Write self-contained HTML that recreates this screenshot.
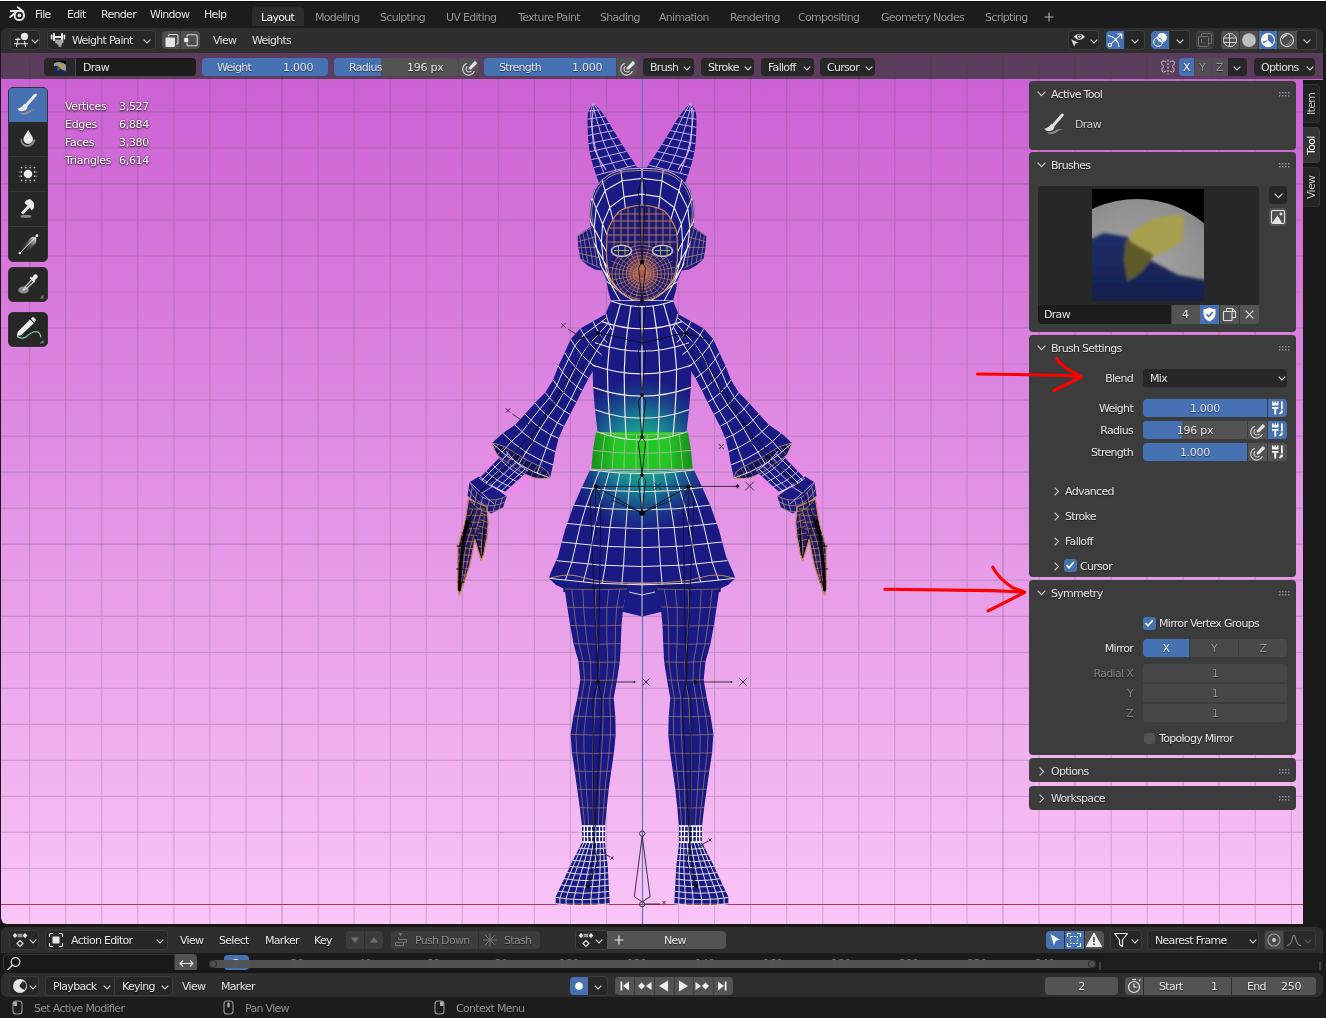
<!DOCTYPE html>
<html><head><meta charset="utf-8"><title>Blender</title>
<style>
*{box-sizing:border-box;margin:0;padding:0}
html,body{width:1326px;height:1018px;overflow:hidden;background:#181818}
body{position:relative;font-family:"DejaVu Sans","Liberation Sans",sans-serif;font-size:11px;letter-spacing:-0.7px;color:#e6e6e6;line-height:13px;white-space:nowrap}
.a{position:absolute}
.t{position:absolute;height:13px;line-height:13px;text-shadow:0 1px 1px rgba(0,0,0,.55)}
.st{color:#fff;letter-spacing:-0.3px;text-shadow:0 1px 2px rgba(0,0,0,.8),0 0 2px rgba(0,0,0,.5)}
.rot{transform-origin:0 0;transform:rotate(-90deg)}
.n{letter-spacing:-0.25px}
.dim{color:#989898}
.btn{position:absolute;background:#282828;border:1px solid #3d3d3d;border-radius:4px}
.grp{position:absolute;background:#545454;border-radius:4px}
.num{position:absolute;background:#545454;border-radius:4px;overflow:hidden}
.blue{background:#4772b3 !important}
.panel{position:absolute;background:#3d3d3d;border-radius:4px}
svg{position:absolute;overflow:visible}
#root{position:absolute;left:0;top:0;width:1326px;height:1018px;will-change:transform;opacity:.999}
</style></head><body><div id="root">
<div class="a" id="topbar" style="left:0;top:0;width:1326px;height:28px;background:#1d1d1d;border-top:1px solid #fff;box-shadow:inset 0 1px 0 #0c0c0c">
<svg style="left:9px;top:5px" width="17" height="17" viewBox="9 6 17 17"><g fill="none" stroke="#e6e6e6" stroke-width="2" stroke-linecap="round"><circle cx="19.3" cy="15.4" r="4.700"/><path d="M11 10.9H20.5M17.8 7.3L23.2 11.6M10.3 17L15.5 12.4"/></g><circle cx="19.3" cy="15.4" r="1.9" fill="#e6e6e6"/></svg>
<span class="t" style="left:35px;top:7px">File</span>
<span class="t" style="left:67px;top:7px">Edit</span>
<span class="t" style="left:101px;top:7px">Render</span>
<span class="t" style="left:150px;top:7px">Window</span>
<span class="t" style="left:204px;top:7px">Help</span>
<div class="a" style="left:252px;top:6px;width:52px;height:19px;background:#2d2d2d;border-radius:4px 4px 0 0"></div>
<span class="t" style="left:261px;top:10px;color:#fff">Layout</span>
<span class="t dim" style="left:315px;top:10px">Modeling</span>
<span class="t dim" style="left:380px;top:10px">Sculpting</span>
<span class="t dim" style="left:446px;top:10px">UV Editing</span>
<span class="t dim" style="left:518px;top:10px">Texture Paint</span>
<span class="t dim" style="left:600px;top:10px">Shading</span>
<span class="t dim" style="left:659px;top:10px">Animation</span>
<span class="t dim" style="left:730px;top:10px">Rendering</span>
<span class="t dim" style="left:798px;top:10px">Compositing</span>
<span class="t dim" style="left:881px;top:10px">Geometry Nodes</span>
<span class="t dim" style="left:985px;top:10px">Scripting</span>
<svg style="left:1044px;top:11px" width="10" height="10" viewBox="0 0 10 10"><path d="M5 0.5V9.5M0.5 5H9.5" stroke="#b0b0b0" stroke-width="1.1"/></svg>
</div>
<div class="a" id="vp" style="left:1px;top:28px;width:1322px;height:896px;border-radius:9px 9px 6px 6px;overflow:hidden;background:linear-gradient(#ca5cd2,#fbc6f8)">
<svg style="left:0;top:0" width="1322" height="896" viewBox="1 28 1322 896">
<path d="M29.7 28V924M65.7 28V924M101.8 28V924M137.8 28V924M173.9 28V924M209.9 28V924M246 28V924M318.1 28V924M354.1 28V924M390.2 28V924M426.2 28V924M462.2 28V924M498.3 28V924M534.4 28V924M570.4 28V924M606.5 28V924M678.5 28V924M714.6 28V924M750.6 28V924M786.7 28V924M822.8 28V924M858.8 28V924M894.8 28V924M930.9 28V924M967 28V924M1039 28V924M1075.1 28V924M1111.2 28V924M1147.2 28V924M1183.2 28V924M1219.3 28V924M1255.3 28V924M1291.4 28V924M1 868.5H1323M1 832.4H1323M1 796.4H1323M1 760.4H1323M1 724.4H1323M1 688.3H1323M1 652.3H1323M1 616.3H1323M1 580.2H1323M1 508.2H1323M1 472.1H1323M1 436.1H1323M1 400.1H1323M1 364H1323M1 328H1323M1 292H1323M1 256H1323M1 219.9H1323M1 147.9H1323M1 111.8H1323M1 75.8H1323M1 39.8H1323" stroke="rgba(90,88,96,.23)" stroke-width="1.2" fill="none"/>
<path d="M282 28V924M1003 28V924M1 544.2H1323M1 183.9H1323" stroke="rgba(88,80,96,.32)" stroke-width="1.25" fill="none"/>
<path d="M1 904.5H1323" stroke="#b5344f" stroke-width="1.2"/>
<path d="M642.5 28V924" stroke="#5d78b8" stroke-width="1.2"/>
</svg>
<svg style="left:0;top:0" width="1322" height="896" viewBox="1 28 1322 896">
<defs>
<radialGradient id="tg" gradientUnits="userSpaceOnUse" cx="642" cy="446" r="78" gradientTransform="translate(642 446) scale(1 .95) translate(-642 -446)"><stop offset="0" stop-color="#22b07a"/><stop offset=".2" stop-color="#1ba08c"/><stop offset=".42" stop-color="#187a94"/><stop offset=".68" stop-color="#1a3f8a"/><stop offset=".92" stop-color="#1b1b86"/></radialGradient>
<linearGradient id="bg" gradientUnits="userSpaceOnUse" x1="593" y1="0" x2="691" y2="0"><stop offset="0" stop-color="#17941d"/><stop offset=".25" stop-color="#25c925"/><stop offset=".75" stop-color="#25c925"/><stop offset="1" stop-color="#17941d"/></linearGradient>
<radialGradient id="sg" gradientUnits="userSpaceOnUse" cx="642" cy="458" r="78"><stop offset="0" stop-color="#22b07a"/><stop offset=".2" stop-color="#1ba08c"/><stop offset=".45" stop-color="#187a94"/><stop offset=".7" stop-color="#1a3f8a"/><stop offset=".95" stop-color="#1b1b86"/></radialGradient>
<radialGradient id="fg" gradientUnits="userSpaceOnUse" cx="642" cy="272" r="22"><stop offset="0" stop-color="#d06a48" stop-opacity=".85"/><stop offset="1" stop-color="#d06a48" stop-opacity="0"/></radialGradient>
<clipPath id="hclip"><path d="M642 167.5L625 168.5L610 173L600 181L594 190L590 202L589 215L590.5 226L595 248L601 268L606.5 280L608 290L611 301L673 301L676 290L677.5 280L683 268L689 248L693.5 226L695 215L694 202L690 190L684 181L674 173L659 168.5L642 167.5Z"/></clipPath>
<clipPath id="fclip"><path d="M642 205L630 207L618.6 212L608.8 227.5L606.8 240L607 262L611 280L620 292L632 299L642 300.5L642 300.5L652 299L664 292L673 280L677 262L677.2 240L675.2 227.5L665.4 212L654 207L642 205Z"/></clipPath>
<filter id="gl" x="-50%" y="-50%" width="200%" height="200%"><feGaussianBlur stdDeviation="2.5"/></filter>
</defs>
<g filter="url(#gl)" fill="none" stroke="#ff7cf5" stroke-width="3" opacity=".9"><path d="M500 455L478 480M530 476L508 496M784 455L806 480M754 476L776 496"/><path d="M462 500L470 520M822 500L814 520"/></g>

<g id="body">
<path d="M592.5 104.2L588.2 111L587.5 119.2L587.6 127.3L587.9 135.5L588.4 143.7L589.6 151.7L591.4 159.7L593.6 167.6L596.1 175.3L599 183L640 172L635.7 165L631.1 158.2L626.6 151.4L622.1 144.5L617.8 137.6L613.4 130.6L609.3 123.5L604.9 116.6L600.1 109.9L594.5 104Z" fill="#1b1b86"/>
<path d="M691.5 104.2L695.8 111L696.5 119.2L696.4 127.3L696.1 135.5L695.6 143.7L694.4 151.7L692.6 159.7L690.4 167.6L687.9 175.3L685 183L644 172L648.3 165L652.9 158.2L657.4 151.4L661.9 144.5L666.2 137.6L670.6 130.6L674.7 123.5L679.1 116.6L683.9 109.9L689.5 104Z" fill="#1b1b86"/>
<path d="M592 226L586 230L577.5 236L578.5 248L580.5 259L587 265L595 269.5L606 271L604 240Z" fill="#1b1b86"/>
<path d="M692 226L698 230L706.5 236L705.5 248L703.5 259L697 265L689 269.5L678 271L680 240Z" fill="#1b1b86"/>
<path d="M642 167.5L625 168.5L610 173L600 181L594 190L590 202L589 215L590.5 226L595 248L601 268L606.5 280L608 290L611 301L673 301L676 290L677.5 280L683 268L689 248L693.5 226L695 215L694 202L690 190L684 181L674 173L659 168.5L642 167.5Z" fill="#1b1b86"/>
<path d="M642 205L630 207L618.6 212L608.8 227.5L606.8 240L607 262L611 280L620 292L632 299L642 300.5L642 300.5L652 299L664 292L673 280L677 262L677.2 240L675.2 227.5L665.4 212L654 207L642 205Z" fill="#1d1c78"/>
<path d="M606 314L593.1 321.3L580.2 328.4L570.6 339.2L564.6 352.7L558.4 366.1L553 379.9L545.2 392.4L534.9 403L525.1 414.1L515 424.9L502.8 433.3L492 443L550 478L553 464.9L555.3 451.6L558.6 438.5L563.9 426.2L570.1 414.3L576.4 402.3L582.3 390.3L588.6 378.3L595.5 366.8L601.6 354.9L607.1 342.5L612 330Z" fill="#1b1b86"/>
<path d="M678 314L690.9 321.3L703.8 328.4L713.4 339.2L719.4 352.7L725.6 366.1L731 379.9L738.8 392.4L749.1 403L758.9 414.1L769 424.9L781.2 433.3L792 443L734 478L731 464.9L728.7 451.6L725.4 438.5L720.1 426.2L713.9 414.3L707.6 402.3L701.7 390.3L695.4 378.3L688.5 366.8L682.4 354.9L676.9 342.5L672 330Z" fill="#1b1b86"/>
<path d="M492 443L497 454.7L508 463L520 471.5L535 478L550 478.2L546 470L525 459L505 447Z" fill="#14145e"/>
<path d="M792 443L787 454.7L776 463L764 471.5L749 478L734 478.2L738 470L759 459L779 447Z" fill="#14145e"/>
<path d="M506 451L499.3 457.8L492.6 464.6L486 471.4L479.3 478.2L504.8 492L510.6 486.8L516.4 481.5L522.2 476.2L528 471Z" fill="#1b1b86"/>
<path d="M778 451L784.7 457.8L791.4 464.6L798 471.4L804.7 478.2L779.2 492L773.4 486.8L767.6 481.5L761.8 476.2L756 471Z" fill="#1b1b86"/>
<path d="M469.5 482.2L479.3 476.3L506.8 495.9L502.9 507.7L491 513.6L467.5 495.9Z" fill="#1b1b86"/>
<path d="M814.5 482.2L804.7 476.3L777.2 495.9L781.1 507.7L793 513.6L816.5 495.9Z" fill="#1b1b86"/>
<path d="M468.5 499L487 507L488.2 523L487 538L484 552L481.2 561L478.5 552L475 539L472.5 552L469.6 566L464 583L459.2 595L457.7 588L457.9 547L461 535L464.7 524Z" fill="#201c6a"/>
<path d="M815.5 499L797 507L795.8 523L797 538L800 552L802.8 561L805.5 552L809 539L811.5 552L814.4 566L820 583L824.8 595L826.3 588L826.1 547L823 535L819.3 524Z" fill="#201c6a"/>
<path d="M611 301L605 315L597 335L592.5 360L593 385.6L595 410L597.5 432L686.5 432L689 410L691 385.6L691.5 360L687 335L679 315L673 301Z" fill="url(#tg)"/>
<path d="M596 432L593 450L591.3 469L692.7 469L691 450L688 432Z" fill="url(#bg)"/>
<path d="M563.5 592L562 572L628 572L627 592Z" fill="#17176e"/>
<path d="M720.5 592L722 572L656 572L657 592Z" fill="#17176e"/>
<path d="M590 470L582 487L573.6 505.7L565 530L557.9 556.8L551 572L548.8 578.3L556 585L564.6 589.1L600 585L642 583L684 585L719.4 589.1L728 585L735.2 578.3L735.2 578.3L733 572L726.1 556.8L719 530L710.4 505.7L702 487L694 470Z" fill="url(#sg)"/>
<path d="M627.4 584L622.5 611.7L642.2 616.6L661.9 611.7L657 584Z" fill="#1c1c86"/>
<path d="M564.6 589L567.3 607.3L570.2 625.5L573.5 643.7L578.5 661.5L580.3 679.8L577.3 698L573.4 716.1L570.6 734.3L571.9 752.8L574.7 771L577.2 789.3L579.8 807.6L582 826L605 826L606.7 807.7L608.7 789.4L611.2 771.2L613.9 753.1L615.7 734.8L615.3 716.4L613.7 698.1L617 680.1L619.8 662L620.8 643.6L621.5 625.3L623.3 607L627 589Z" fill="#1b1b86"/>
<path d="M719.4 589L716.7 607.3L713.8 625.5L710.5 643.7L705.5 661.5L703.7 679.8L706.7 698L710.6 716.1L713.4 734.3L712.1 752.8L709.3 771L706.8 789.3L704.2 807.6L702 826L679 826L677.3 807.7L675.3 789.4L672.8 771.2L670.1 753.1L668.3 734.8L668.7 716.4L670.3 698.1L667 680.1L664.2 662L663.2 643.6L662.5 625.3L660.7 607L657 589Z" fill="#1b1b86"/>
<path d="M582 826L582.1 831.3L582.1 836.7L582.2 842L604.8 842L604.9 836.7L604.9 831.3L605 826Z" fill="#1b1b86"/>
<path d="M702 826L701.9 831.3L701.9 836.7L701.8 842L679.2 842L679.1 836.7L679.1 831.3L679 826Z" fill="#1b1b86"/>
<path d="M582.2 842L571.4 863.4L555.7 896.8L555.7 903.7L609.7 903.7L607.8 867.3L604.8 842Z" fill="#1b1b86"/>
<path d="M701.8 842L712.6 863.4L728.3 896.8L728.3 903.7L674.3 903.7L676.2 867.3L679.2 842Z" fill="#1b1b86"/>
<ellipse cx="642" cy="272" rx="16" ry="22" fill="url(#fg)"/>
</g>
<g fill="none" stroke-linejoin="round">
<path d="M592.5 104.2Q593.5 104.1 594.5 104M588.2 111Q594.2 110.5 600.1 109.9M587.5 119.2Q596.2 117.9 604.9 116.6M587.6 127.3Q598.4 125.4 609.3 123.5M587.9 135.5Q600.7 133 613.4 130.6M588.4 143.7Q603.1 140.6 617.8 137.6M589.6 151.7Q605.9 148.1 622.1 144.5M591.4 159.7Q609 155.5 626.6 151.4M593.6 167.6Q612.4 162.9 631.1 158.2M596.1 175.3Q615.9 170.2 635.7 165M592.9 104.2L590.6 110.8L591 118.7L591.9 126.6L593 134.5L594.2 142.5L596.1 150.3L598.4 158L601.1 165.7L604 173.3M593.5 104.1L594.2 110.5L596.2 117.9L598.4 125.4L600.7 133L603.1 140.6L605.9 148.1L609 155.5L612.4 162.9L615.9 170.2M594.1 104L597.8 110.2L601.5 117.1L605 124.3L608.4 131.6L611.9 138.8L615.7 145.9L619.6 153L623.7 160.1L627.9 167.1M691.5 104.2Q690.5 104.1 689.5 104M695.8 111Q689.8 110.5 683.9 109.9M696.5 119.2Q687.8 117.9 679.1 116.6M696.4 127.3Q685.6 125.4 674.7 123.5M696.1 135.5Q683.3 133 670.6 130.6M695.6 143.7Q680.9 140.6 666.2 137.6M694.4 151.7Q678.1 148.1 661.9 144.5M692.6 159.7Q675 155.5 657.4 151.4M690.4 167.6Q671.6 162.9 652.9 158.2M687.9 175.3Q668.1 170.2 648.3 165M691.1 104.2L693.4 110.8L693 118.7L692.1 126.6L691 134.5L689.8 142.5L687.9 150.3L685.6 158L682.9 165.7L680 173.3M690.5 104.1L689.8 110.5L687.8 117.9L685.6 125.4L683.3 133L680.9 140.6L678.1 148.1L675 155.5L671.6 162.9L668.1 170.2M689.9 104L686.2 110.2L682.5 117.1L679 124.3L675.6 131.6L672.1 138.8L668.3 145.9L664.4 153L660.3 160.1L656.1 167.1" stroke="#d9b6ea" stroke-width="0.9"/>
<path d="M593.5 108L593.1 111.4L592.6 114.8L592.2 118.2L592 121.6L592 125.1L592.1 128.5L592.3 131.9L592.5 135.4L592.9 138.8L593.3 142.2L593.9 145.6L594.7 148.9L595.8 152.2L597.2 155.3L598.8 158.3L600.6 161.2L602.4 164.1L604.3 167L606 170M691.5 108L691.7 111.4L691.9 114.8L692.1 118.3L692.1 121.7L692 125.1L691.8 128.5L691.6 132L691.4 135.4L691.1 138.8L690.7 142.2L690.1 145.6L689.3 148.9L688.2 152.2L686.8 155.3L685.2 158.3L683.4 161.3L681.6 164.1L679.7 167L678 170" stroke="#d9b6ea" stroke-width="1.1"/>
<path d="M577.5 236Q584.8 231.5 592 227M577.9 241.8Q586.5 239.4 595 237M578.4 247.6Q587.9 247.4 597.4 247.2M579.4 253.3Q589.1 255.4 598.8 257.6M580.5 259Q590.2 263.5 600 268M579.6 234.7L580.4 241.1L581.2 247.5L582.3 253.9L583.4 260.3M582.9 232.6L584.3 240L585.5 247.4L586.6 254.9L587.8 262.4M586.6 230.4L588.6 238.8L590.3 247.4L591.6 256L592.7 264.6M589.9 228.3L592.5 237.7L594.6 247.3L595.9 257L597.1 266.7M706.5 236Q699.2 231.5 692 227M706.1 241.8Q697.5 239.4 689 237M705.6 247.6Q696.1 247.4 686.6 247.2M704.6 253.3Q694.9 255.4 685.2 257.6M703.5 259Q693.8 263.5 684 268M704.4 234.7L703.6 241.1L702.8 247.5L701.7 253.9L700.6 260.3M701.1 232.6L699.7 240L698.5 247.4L697.4 254.9L696.2 262.4M697.4 230.4L695.4 238.8L693.7 247.4L692.4 256L691.3 264.6M694.1 228.3L691.5 237.7L689.4 247.3L688.1 257L686.9 266.7" stroke="#b9916b" stroke-width="0.7"/>
<path d="M642 167.5Q642 186.2 642 205M620.7 169.3Q623 188.8 625.4 208.3M601.7 178.8Q607.4 199 613.1 219.3M591.7 197.4Q599.4 216.2 607 234.9M589 218.6Q597.8 235.2 606.5 251.9M592 239.8Q599.9 254.3 607.9 268.8M597.3 260.5Q605.4 272.6 613.5 284.6M605.2 280.4Q615.5 288.3 625.8 296.1M611 301Q626.5 300.8 642 300.5M642 178.4L622.1 180.7L605.1 190.6L596.2 208.3L594.1 228.3L596.6 248.2L602 267.6L611.2 285L620 300.9M642 194.1L624 196.9L609.8 207.5L602.6 224L601.4 242.2L603.3 260.3L608.8 277.6L619.8 291.5L633 300.6M642 167.5Q642 186.2 642 205M663.3 169.3Q661 188.8 658.6 208.3M682.3 178.8Q676.6 199 670.9 219.3M692.3 197.4Q684.6 216.2 677 234.9M695 218.6Q686.2 235.2 677.5 251.9M692 239.8Q684.1 254.3 676.1 268.8M686.7 260.5Q678.6 272.6 670.5 284.6M678.8 280.4Q668.5 288.3 658.2 296.1M673 301Q657.5 300.8 642 300.5M642 178.4L661.9 180.7L678.9 190.6L687.8 208.3L689.9 228.3L687.4 248.2L682 267.6L672.8 285L664 300.9M642 194.1L660 196.9L674.2 207.5L681.4 224L682.6 242.2L680.7 260.3L675.2 277.6L664.2 291.5L651 300.6" stroke="#efe8e2" stroke-width="1.1" clip-path="url(#hclip)"/>
<path d="M591.8 226L590.8 221.4L589.9 216.8L589.8 212.1L590.1 207.4L590.7 202.7L591.9 198.1L593.4 193.6L595.3 189.3L597.7 185.3L600.7 181.6L604.1 178.3L607.8 175.4L611.9 173.2L616.3 171.5L620.9 170.3L625.5 169.3L630.2 168.8L634.9 168.5L639.6 168.4L644.4 168.4L649.1 168.5L653.8 168.8L658.5 169.3L663.1 170.3L667.7 171.5L672.1 173.2L676.2 175.4L679.9 178.3L683.3 181.6L686.3 185.3L688.7 189.3L690.6 193.6L692.1 198.1L693.3 202.7L693.9 207.4L694.2 212.1L694.1 216.8L693.2 221.4L692.2 226" stroke="#cdb6c8" stroke-width="1.0"/>
<path d="M593.5 226.1L592.6 221.7L591.8 217.2L591.6 212.6L591.9 208.1L592.5 203.6L593.6 199.2L595.1 194.9L597 190.7L599.3 186.8L602.2 183.3L605.4 180.1L609 177.3L613 175.1L617.3 173.5L621.6 172.3L626.1 171.4L630.6 170.9L635.2 170.6L639.7 170.5L644.3 170.5L648.8 170.6L653.4 170.9L657.9 171.4L662.4 172.3L666.7 173.5L671 175.1L675 177.3L678.6 180.1L681.8 183.3L684.7 186.8L687 190.7L688.9 194.9L690.4 199.2L691.5 203.6L692.1 208.1L692.4 212.6L692.2 217.2L691.4 221.7L690.5 226.1" stroke="#b99a8a" stroke-width="0.9"/>
<path d="M647 274L646.9 274.8L646.7 275.7L646.3 276.4L645.8 277.1L645.1 277.7L644.4 278.2L643.5 278.5L642.7 278.7L641.8 278.7L640.9 278.6L640 278.4L639.2 278L638.5 277.4L638 276.8L637.5 276.1L637.2 275.3L637 274.4L637 273.6L637.2 272.7L637.5 271.9L638 271.2L638.5 270.6L639.2 270L640 269.6L640.9 269.4L641.8 269.3L642.7 269.3L643.5 269.5L644.4 269.8L645.1 270.3L645.8 270.9L646.3 271.6L646.7 272.3L646.9 273.2L647 274ZM650.6 274L650.4 275.5L650 276.9L649.4 278.2L648.5 279.4L647.3 280.4L646.1 281.2L644.6 281.7L643.2 282.1L641.6 282.1L640.1 281.9L638.6 281.5L637.3 280.8L636.1 279.9L635.1 278.8L634.3 277.5L633.7 276.2L633.5 274.7L633.5 273.3L633.7 271.8L634.3 270.5L635.1 269.2L636.1 268.1L637.3 267.2L638.6 266.5L640.1 266.1L641.6 265.9L643.2 265.9L644.6 266.3L646.1 266.8L647.3 267.6L648.5 268.6L649.4 269.8L650 271.1L650.4 272.5L650.6 274ZM654.1 274L653.9 276.1L653.4 278.1L652.4 279.9L651.1 281.6L649.6 283L647.8 284.2L645.8 285L643.6 285.4L641.5 285.5L639.3 285.2L637.2 284.6L635.3 283.6L633.6 282.3L632.2 280.8L631.1 279L630.3 277.1L629.9 275L629.9 273L630.3 270.9L631.1 269L632.2 267.2L633.6 265.7L635.3 264.4L637.2 263.4L639.3 262.8L641.5 262.5L643.6 262.6L645.8 263L647.8 263.8L649.6 265L651.1 266.4L652.4 268.1L653.4 269.9L653.9 271.9L654.1 274ZM657.7 274L657.5 276.7L656.7 279.2L655.5 281.7L653.8 283.8L651.8 285.7L649.4 287.1L646.9 288.2L644.1 288.8L641.3 288.9L638.5 288.6L635.8 287.7L633.3 286.5L631.1 284.8L629.3 282.8L627.8 280.5L626.9 278L626.3 275.3L626.3 272.7L626.9 270L627.8 267.5L629.3 265.2L631.1 263.2L633.3 261.5L635.8 260.3L638.5 259.4L641.3 259.1L644.1 259.2L646.9 259.8L649.4 260.9L651.8 262.3L653.8 264.2L655.5 266.3L656.7 268.8L657.5 271.3L657.7 274ZM661.3 274L661 277.3L660.1 280.4L658.6 283.4L656.5 286.1L654 288.3L651.1 290.1L648 291.4L644.6 292.2L641.1 292.3L637.7 291.9L634.4 290.8L631.4 289.3L628.7 287.2L626.4 284.8L624.6 281.9L623.4 278.9L622.8 275.6L622.8 272.4L623.4 269.1L624.6 266.1L626.4 263.2L628.7 260.8L631.4 258.7L634.4 257.2L637.7 256.1L641.1 255.7L644.6 255.8L648 256.6L651.1 257.9L654 259.7L656.5 261.9L658.6 264.6L660.1 267.6L661 270.7L661.3 274ZM664.9 274L664.5 277.9L663.4 281.6L661.6 285.1L659.2 288.3L656.3 291L652.8 293.1L649.1 294.7L645.1 295.5L641 295.7L636.9 295.2L633 294L629.4 292.1L626.2 289.7L623.5 286.8L621.4 283.4L620 279.8L619.2 275.9L619.2 272.1L620 268.2L621.4 264.6L623.5 261.2L626.2 258.3L629.4 255.9L633 254L636.9 252.8L641 252.3L645.1 252.5L649.1 253.3L652.8 254.9L656.3 257L659.2 259.7L661.6 262.9L663.4 266.4L664.5 270.1L664.9 274ZM668.4 274L668 278.5L666.7 282.8L664.7 286.9L661.9 290.5L658.5 293.6L654.5 296.1L650.2 297.9L645.5 298.9L640.8 299.1L636.1 298.5L631.6 297.1L627.4 295L623.7 292.1L620.6 288.8L618.2 284.9L616.5 280.7L615.7 276.3L615.7 271.7L616.5 267.3L618.2 263.1L620.6 259.2L623.7 255.9L627.4 253L631.6 250.9L636.1 249.5L640.8 248.9L645.5 249.1L650.2 250.1L654.5 251.9L658.5 254.4L661.9 257.5L664.7 261.1L666.7 265.2L668 269.5L668.4 274ZM672 274L671.5 279.1L670.1 284L667.8 288.6L664.6 292.8L660.7 296.3L656.2 299.1L651.3 301.1L646 302.2L640.7 302.5L635.3 301.8L630.2 300.2L625.5 297.8L621.3 294.6L617.7 290.8L615 286.4L613.1 281.6L612.1 276.6L612.1 271.4L613.1 266.4L615 261.6L617.7 257.2L621.3 253.4L625.5 250.2L630.2 247.8L635.3 246.2L640.7 245.5L646 245.8L651.3 246.9L656.2 248.9L660.7 251.7L664.6 255.2L667.8 259.4L670.1 264L671.5 268.9L672 274Z" stroke="#cf8a55" stroke-width="0.7" clip-path="url(#fclip)"/>
<path d="M646 274L676 274M645.9 274.9L675.1 280.7M645.6 275.7L672.6 287M645.1 276.5L668.6 292.7M644.5 277.1L663.2 297.5M643.7 277.6L656.8 301M642.9 277.9L649.6 303.2M642 278L642 304M641.1 277.9L634.4 303.2M640.3 277.6L627.2 301M639.5 277.1L620.8 297.5M638.9 276.5L615.4 292.7M638.4 275.7L611.4 287M638.1 274.9L608.9 280.7M638 274L608 274M638.1 273.1L608.9 267.3M638.4 272.3L611.4 261M638.9 271.5L615.4 255.3M639.5 270.9L620.8 250.5M640.3 270.4L627.2 247M641.1 270.1L634.4 244.8M642 270L642 244M642.9 270.1L649.6 244.8M643.7 270.4L656.8 247M644.5 270.9L663.2 250.5M645.1 271.5L668.6 255.3M645.6 272.3L672.6 261M645.9 273.1L675.1 267.3" stroke="#cf8a55" stroke-width="0.6" clip-path="url(#fclip)"/>
<path d="M614 208V246M621 208V246M628 208V246M635 208V246M642 208V246M649 208V246M656 208V246M663 208V246M670 208V246M608 214H676M608 221H676M608 228H676M608 235H676M608 242H676" stroke="#cf8a55" stroke-width="0.8" clip-path="url(#fclip)"/>
<path d="M642 205L638.6 205.5L635.1 205.9L631.7 206.5L628.4 207.4L625.1 208.4L621.9 209.7L619 211.6L616.7 214.2L614.6 217L612.8 219.9L611 222.9L609.5 226L608.2 229.2L607.3 232.5L607 235.9L606.8 239.4L606.7 242.9L606.6 246.3L606.5 249.8L606.5 253.2L606.6 256.7L606.8 260.2L607.2 263.6L607.6 267L608.2 270.4L609 273.8L609.9 277.2L611.2 280.4L612.8 283.4L614.7 286.3L616.9 289L619.4 291.4L622 293.6L624.9 295.6L627.9 297.2L631.1 298.6L634.4 299.7L637.8 300.2L641.3 300.4L642.7 300.4L646.2 300.2L649.6 299.7L652.9 298.6L656.1 297.2L659.1 295.6L662 293.6L664.6 291.4L667.1 289L669.3 286.3L671.2 283.4L672.8 280.4L674.1 277.2L675 273.8L675.8 270.4L676.4 267L676.8 263.6L677.2 260.2L677.4 256.7L677.5 253.2L677.5 249.8L677.4 246.3L677.3 242.9L677.2 239.4L677 235.9L676.7 232.5L675.8 229.2L674.5 226L673 222.9L671.2 219.9L669.4 217L667.3 214.2L665 211.6L662.1 209.7L658.9 208.4L655.6 207.4L652.3 206.5L648.9 205.9L645.4 205.5L642 205ZM468.5 499L487 507L488.2 523L487 538L484 552L481.2 561L478.5 552L475 539L472.5 552L469.6 566L464 583L459.2 595L457.7 588L457.9 547L461 535L464.7 524ZM815.5 499L797 507L795.8 523L797 538L800 552L802.8 561L805.5 552L809 539L811.5 552L814.4 566L820 583L824.8 595L826.3 588L826.1 547L823 535L819.3 524Z" stroke="#cf8a55" stroke-width="1.2"/>
<path d="M606 314Q607.9 323.7 612 330M593.1 321.3Q598.5 334.5 607.1 342.5M580.2 328.4Q588.7 345.1 601.6 354.9M570.6 339.2Q580.7 356.8 595.5 366.8M564.6 352.7Q574.3 369.1 588.6 378.3M558.4 366.1Q568.2 381.6 582.3 390.3M553 379.9Q562.6 394.4 576.4 402.3M545.2 392.4Q555.5 406.7 570.1 414.3M534.9 403Q547 418.4 563.9 426.2M525.1 414.1Q539.2 430.5 558.6 438.5M515 424.9Q532.1 443.2 555.3 451.6M502.8 433.3Q524.1 455.1 553 464.9M492 443Q516.6 467.4 550 478M606.8 317.7L595.4 326.3L583.7 334.8L574.8 345.8L568.6 358.9L562.5 372L556.9 385.4L549.5 397.8L539.9 408.8L530.9 420.3L522 431.8L511.6 441.4L502.1 452.1M608.5 322.9L599.3 333.2L589.8 343.4L581.8 354.9L575.5 367.3L569.3 379.9L563.6 392.7L556.6 405L548.2 416.5L540.5 428.4L533.6 440.7L526 452.1L518.8 463.9M610.5 327.4L603.8 339.1L596.7 350.7L589.8 362.5L583.1 374.4L576.9 386.6L571.1 398.9L564.5 411L557.4 422.8L551.1 435L546.3 447.9L541.8 460.5L537.1 473.2M678 314Q676.1 323.7 672 330M690.9 321.3Q685.5 334.5 676.9 342.5M703.8 328.4Q695.3 345.1 682.4 354.9M713.4 339.2Q703.3 356.8 688.5 366.8M719.4 352.7Q709.7 369.1 695.4 378.3M725.6 366.1Q715.8 381.6 701.7 390.3M731 379.9Q721.4 394.4 707.6 402.3M738.8 392.4Q728.5 406.7 713.9 414.3M749.1 403Q737 418.4 720.1 426.2M758.9 414.1Q744.8 430.5 725.4 438.5M769 424.9Q751.9 443.2 728.7 451.6M781.2 433.3Q759.9 455.1 731 464.9M792 443Q767.4 467.4 734 478M677.2 317.7L688.6 326.3L700.3 334.8L709.2 345.8L715.4 358.9L721.5 372L727.1 385.4L734.5 397.8L744.1 408.8L753.1 420.3L762 431.8L772.4 441.4L781.9 452.1M675.5 322.9L684.7 333.2L694.2 343.4L702.2 354.9L708.5 367.3L714.7 379.9L720.4 392.7L727.4 405L735.8 416.5L743.5 428.4L750.4 440.7L758 452.1L765.2 463.9M673.5 327.4L680.2 339.1L687.3 350.7L694.2 362.5L700.9 374.4L707.1 386.6L712.9 398.9L719.5 411L726.6 422.8L732.9 435L737.7 447.9L742.2 460.5L746.9 473.2" stroke="#efe8e2" stroke-width="0.95"/>
<path d="M492 443L494.2 449.2L497.3 455L502.4 459.3L507.9 462.9L513.1 466.9L518.6 470.7L524.4 473.8L530.4 476.6L536.8 478.3L543.4 478.5L550 478.2M492 443L498.2 444.5L504.2 446.6L509.8 449.7L515.2 453L520.6 456.4L526.1 459.6L531.8 462.5L537.6 465.3L543.2 468.2L548.1 472.2L550 478.2M792 443L789.8 449.2L786.7 455L781.6 459.3L776.1 462.9L770.9 466.9L765.4 470.7L759.6 473.8L753.6 476.6L747.2 478.3L740.6 478.5L734 478.2M792 443L785.8 444.5L779.8 446.6L774.2 449.7L768.8 453L763.4 456.4L757.9 459.6L752.2 462.5L746.4 465.3L740.8 468.2L735.9 472.2L734 478.2M469.5 482.2Q483.7 508.4 506.8 495.9M468.5 489Q482.3 514.2 504.9 501.8M467.5 495.9Q481 520 502.9 507.7M472.3 486.9L471.2 493.5L470.2 500.2M476.7 492.4L475.5 498.9L474.4 505.3M482.6 497.2L481.3 503.3L479.9 509.5M489.4 499.7L487.9 505.7L486.4 511.7M496.3 499.7L494.7 505.6L493 511.5M502.4 497.9L500.6 503.8L498.8 509.7M814.5 482.2Q800.3 508.4 777.2 495.9M815.5 489Q801.7 514.2 779.1 501.8M816.5 495.9Q803 520 781.1 507.7M811.7 486.9L812.8 493.5L813.8 500.2M807.3 492.4L808.5 498.9L809.6 505.3M801.4 497.2L802.7 503.3L804.1 509.5M794.6 499.7L796.1 505.7L797.6 511.7M787.7 499.7L789.3 505.6L791 511.5M781.6 497.9L783.4 503.8L785.2 509.7" stroke="#b9916b" stroke-width="0.8"/>
<path d="M494.2 449.2L498.2 444.5M497.3 455L504.2 446.6M502.4 459.3L509.8 449.7M507.9 462.9L515.2 453M513.1 466.9L520.6 456.4M518.6 470.7L526.1 459.6M524.4 473.8L531.8 462.5M530.4 476.6L537.6 465.3M536.8 478.3L543.2 468.2M543.4 478.5L548.1 472.2M789.8 449.2L785.8 444.5M786.7 455L779.8 446.6M781.6 459.3L774.2 449.7M776.1 462.9L768.8 453M770.9 466.9L763.4 456.4M765.4 470.7L757.9 459.6M759.6 473.8L752.2 462.5M753.6 476.6L746.4 465.3M747.2 478.3L740.8 468.2M740.6 478.5L735.9 472.2" stroke="#b9916b" stroke-width="0.6"/>
<path d="M506 451Q514.9 463.1 528 471M499.3 457.8Q508.6 469.1 522.2 476.2M492.6 464.6Q502.4 475.1 516.4 481.5M486 471.4Q496.2 481.1 510.6 486.8M479.3 478.2Q490 487.1 504.8 492M508.1 453.8L501.6 460.4L495 467L488.4 473.6L481.8 480.2M511.5 457.7L505.1 464L498.7 470.4L492.3 476.7L485.9 483.1M515.9 462L509.7 468L503.5 474.1L497.2 480.1L491 486.1M520.7 466L514.7 471.7L508.6 477.4L502.6 483.1L496.5 488.8M525 469.1L519.1 474.5L513.2 479.9L507.3 485.4L501.4 490.8M778 451Q769.1 463.1 756 471M784.7 457.8Q775.4 469.1 761.8 476.2M791.4 464.6Q781.6 475.1 767.6 481.5M798 471.4Q787.8 481.1 773.4 486.8M804.7 478.2Q794 487.1 779.2 492M775.9 453.8L782.4 460.4L789 467L795.6 473.6L802.2 480.2M772.5 457.7L778.9 464L785.3 470.4L791.7 476.7L798.1 483.1M768.1 462L774.3 468L780.5 474.1L786.8 480.1L793 486.1M763.3 466L769.3 471.7L775.4 477.4L781.4 483.1L787.5 488.8M759 469.1L764.9 474.5L770.8 479.9L776.7 485.4L782.6 490.8" stroke="#efe8e2" stroke-width="0.8"/>
<path d="M469.5 482.2Q481.8 493.1 494 504M479.3 476.3Q493.1 486.1 506.8 495.9M481.8 493.1L493.1 486.1M814.5 482.2Q802.2 493.1 790 504M804.7 476.3Q791 486.1 777.2 495.9M802.2 493.1L791 486.1" stroke="#d9b6ea" stroke-width="0.8"/>
<path d="M469.6 509Q477.3 509 485 509M467.5 515.4Q475.4 515.5 483.3 515.7M465.4 521.8Q473.5 522.1 481.6 522.4M463.3 528.3Q471.5 528.6 479.7 529M461 534.6Q469.2 535.1 477.3 535.5M459.1 541.1Q467 541.5 474.9 541.9M457.8 547.7Q465.4 548.2 473.1 548.6M457.4 554.5Q464.4 554.9 471.5 555.3M457.4 561.2Q463.7 561.6 470 562M457.6 568Q463 568.4 468.3 568.7M457.8 574.8Q462.1 575 466.4 575.3M458.1 581.5Q461.2 581.7 464.3 581.9M458.5 588.3Q460.3 588.4 462.1 588.4M459 595Q459.5 595 460 595M472.7 509L470.6 515.5L468.6 521.9L466.5 528.4L464.2 534.8L462.2 541.3L460.8 547.9L460.2 554.6L459.9 561.4L459.7 568.1L459.5 574.9L459.3 581.6L459.2 588.3L459.2 595M477.3 509L475.4 515.5L473.5 522.1L471.5 528.6L469.2 535.1L467 541.5L465.4 548.2L464.4 554.9L463.7 561.6L463 568.4L462.1 575L461.2 581.7L460.3 588.4L459.5 595M481.9 509L480.2 515.6L478.4 522.3L476.4 528.8L474.1 535.3L471.8 541.8L470 548.4L468.7 555.1L467.5 561.9L466.2 568.6L464.7 575.2L463.1 581.8L461.4 588.4L459.8 595M814.4 509Q806.7 509 799 509M816.5 515.4Q808.6 515.5 800.7 515.7M818.6 521.8Q810.5 522.1 802.4 522.4M820.7 528.3Q812.5 528.6 804.3 529M823 534.6Q814.8 535.1 806.7 535.5M824.9 541.1Q817 541.5 809.1 541.9M826.2 547.7Q818.6 548.2 810.9 548.6M826.6 554.5Q819.6 554.9 812.5 555.3M826.6 561.2Q820.3 561.6 814 562M826.4 568Q821 568.4 815.7 568.7M826.2 574.8Q821.9 575 817.6 575.3M825.9 581.5Q822.8 581.7 819.7 581.9M825.5 588.3Q823.7 588.4 821.9 588.4M825 595Q824.5 595 824 595M811.3 509L813.4 515.5L815.4 521.9L817.5 528.4L819.8 534.8L821.8 541.3L823.2 547.9L823.8 554.6L824.1 561.4L824.3 568.1L824.5 574.9L824.7 581.6L824.8 588.3L824.8 595M806.7 509L808.6 515.5L810.5 522.1L812.5 528.6L814.8 535.1L817 541.5L818.6 548.2L819.6 554.9L820.3 561.6L821 568.4L821.9 575L822.8 581.7L823.7 588.4L824.5 595M802.1 509L803.8 515.6L805.6 522.3L807.6 528.8L809.9 535.3L812.2 541.8L814 548.4L815.3 555.1L816.5 561.9L817.8 568.6L819.3 575.2L820.9 581.8L822.6 588.4L824.2 595M481 513Q484.5 514.5 488 516M479.8 519.6Q483.8 521 487.8 522.4M478.5 526.1Q483.1 527.4 487.7 528.7M477.4 532.7Q482.4 533.9 487.3 535.1M477 539.3Q481.7 540.4 486.4 541.4M477.7 546Q481.4 546.8 485.1 547.6M479.1 552.5Q481.3 553.1 483.5 553.8M480.5 559Q481.2 559.5 482 560M484.5 514.5L483.8 521L483.1 527.4L482.4 533.9L481.7 540.4L481.4 546.8L481.3 553.1L481.2 559.5M803 513Q799.5 514.5 796 516M804.2 519.6Q800.2 521 796.2 522.4M805.5 526.1Q800.9 527.4 796.3 528.7M806.6 532.7Q801.6 533.9 796.7 535.1M807 539.3Q802.3 540.4 797.6 541.4M806.3 546Q802.6 546.8 798.9 547.6M804.9 552.5Q802.7 553.1 800.5 553.8M803.5 559Q802.8 559.5 802 560M799.5 514.5L800.2 521L800.9 527.4L801.6 533.9L802.3 540.4L802.6 546.8L802.7 553.1L802.8 559.5" stroke="#cf8a55" stroke-width="0.7"/>
<path d="M611 301Q642 312.2 673 301M602.1 321.6Q642 335.9 681.9 321.6M595.1 342.8Q642 359.7 688.9 342.8M592.3 365Q642 382.9 691.7 365M593.1 387.4Q642 405 690.9 387.4M595 409.7Q642 426.7 689 409.7M597.5 432Q642 448 686.5 432M620.4 303.9L614.2 325.3L609.3 347.1L607.4 369.6L607.9 391.9L609.2 414.1L611 436.1M630.9 305.9L627.7 327.8L625.2 350.2L624.2 372.8L624.5 395.1L625.1 417.1L626.1 439M642 306.6L642 328.8L642 351.2L642 374L642 396.2L642 418.2L642 440M653.1 305.9L656.3 327.8L658.8 350.2L659.8 372.8L659.5 395.1L658.9 417.1L657.9 439M663.6 303.9L669.8 325.3L674.7 347.1L676.6 369.6L676.1 391.9L674.8 414.1L673 436.1" stroke="#efe8e2" stroke-width="1.2"/>
<path d="M596 432Q642 437.5 688 432M593 450.4Q642 456.3 691 450.4M591.3 469Q642 475.1 692.7 469M605.1 433L602.7 451.5L601.3 470.1M615 433.8L613.2 452.3L612.2 471M625.5 434.4L624.4 453L623.8 471.7M636.5 434.7L636.1 453.3L635.9 472M647.5 434.7L647.9 453.3L648.1 472M658.5 434.4L659.6 453L660.2 471.7M669 433.8L670.8 452.3L671.8 471M678.9 433L681.3 451.5L682.7 470.1" stroke="#a8b89a" stroke-width="0.9"/>
<path d="M590 470Q642 477.3 694 470M581.8 487.5Q642 496 702.2 487.5M573.8 505.2Q642 514.7 710.2 505.2M567.1 523.4Q642 533.8 716.9 523.4M561.8 542Q642 553.2 722.2 542M556.5 560.6Q642 572.5 727.5 560.6M548.8 578.3Q642 591.3 735.2 578.3M599.2 471.2L592.4 488.9L585.9 506.7L580.4 525.1L576 543.8L571.7 562.5L565.3 580.4M609.2 472.2L604 490.1L598.9 508.1L594.7 526.5L591.4 545.3L588 564.2L583.2 582.2M619.7 473L616.2 491L612.8 509.1L609.9 527.6L607.7 546.6L605.4 565.5L602.1 583.6M630.7 473.5L629 491.5L627.2 509.7L625.8 528.4L624.7 547.3L623.5 566.3L621.8 584.5M642 473.6L642 491.7L642 510L642 528.6L642 547.6L642 566.6L642 584.8M653.3 473.5L655 491.5L656.8 509.7L658.2 528.4L659.3 547.3L660.5 566.3L662.2 584.5M664.3 473L667.8 491L671.2 509.1L674.1 527.6L676.3 546.6L678.6 565.5L681.9 583.6M674.8 472.2L680 490.1L685.1 508.1L689.3 526.5L692.6 545.3L696 564.2L700.8 582.2M684.8 471.2L691.6 488.9L698.1 506.7L703.6 525.1L708 543.8L712.3 562.5L718.7 580.4" stroke="#efe8e2" stroke-width="1.0"/>
<path d="M548.8 578.3L555.2 576.9L561.5 575.5L568 575L574.4 575.5L580.8 576.9L587.1 578.5L593.4 580L599.8 581L606.3 581.6L612.8 582.1L619.3 582.5L625.8 582.7L632.3 582.9L638.8 583L645.2 583L651.7 582.9L658.2 582.7L664.7 582.5L671.2 582.1L677.7 581.6L684.2 581L690.6 580L696.9 578.5L703.2 576.9L709.6 575.5L716 575L722.5 575.5L728.8 576.9L735.2 578.3" stroke="#b9916b" stroke-width="1.0"/>
<path d="M629 592L642 595L655 592M642 584V616" stroke="#efe8e2" stroke-width="0.9"/>
<path d="M564.6 589Q595.8 590.5 627 589M567.3 607.3Q595.2 608.5 623.3 607M570.2 625.5Q595.9 626.6 621.5 625.3M573.5 643.7Q597.2 644.8 620.8 643.6M578.5 661.5Q599.1 662.8 619.8 662M580.3 679.8Q598.6 680.8 617 680.1M577.3 698Q595.5 698.9 613.7 698.1M573.4 716.1Q594.4 717.3 615.3 716.4M570.6 734.3Q593.2 735.7 615.7 734.8M571.9 752.8Q592.9 753.9 613.9 753.1M574.7 771Q592.9 772 611.2 771.2M577.2 789.3Q592.9 790.1 608.7 789.4M579.8 807.6Q593.3 808.3 606.7 807.7M582 826Q593.5 826.6 605 826M571.9 589.3L573.8 607.5L576.2 625.8L579 644L583.3 661.8L584.6 680L581.5 698.2L578.3 716.3L575.9 734.6L576.8 753L578.9 771.2L580.9 789.5L583 807.8L584.7 826.1M582.8 589.6L583.6 607.8L585.2 626L587.3 644.2L590.5 662.1L591 680.3L587.9 698.4L585.6 716.6L583.8 734.9L584.1 753.3L585.3 771.5L586.4 789.7L587.7 807.9L588.7 826.2M595.8 589.7L595.3 607.8L595.9 626L597.2 644.3L599.1 662.3L598.6 680.4L595.5 698.5L594.4 716.8L593.2 735.1L592.9 753.4L592.9 771.6L592.9 789.8L593.3 808L593.5 826.3M608.8 589.6L606.9 607.6L606.6 625.9L607 644.1L607.8 662.3L606.3 680.4L603.1 698.5L603.1 716.7L602.6 735.1L601.6 753.4L600.5 771.5L599.5 789.7L598.9 808L598.3 826.2M619.7 589.3L616.7 607.3L615.5 625.6L615.3 643.9L615 662.1L612.7 680.3L609.5 698.3L610.4 716.6L610.5 735L609 753.2L606.9 771.4L605 789.6L603.6 807.8L602.3 826.1M719.4 589Q688.2 590.5 657 589M716.7 607.3Q688.8 608.5 660.7 607M713.8 625.5Q688.1 626.6 662.5 625.3M710.5 643.7Q686.8 644.8 663.2 643.6M705.5 661.5Q684.9 662.8 664.2 662M703.7 679.8Q685.4 680.8 667 680.1M706.7 698Q688.5 698.9 670.3 698.1M710.6 716.1Q689.6 717.3 668.7 716.4M713.4 734.3Q690.8 735.7 668.3 734.8M712.1 752.8Q691.1 753.9 670.1 753.1M709.3 771Q691.1 772 672.8 771.2M706.8 789.3Q691.1 790.1 675.3 789.4M704.2 807.6Q690.7 808.3 677.3 807.7M702 826Q690.5 826.6 679 826M712.1 589.3L710.2 607.5L707.8 625.8L705 644L700.7 661.8L699.4 680L702.5 698.2L705.7 716.3L708.1 734.6L707.2 753L705.1 771.2L703.1 789.5L701 807.8L699.3 826.1M701.2 589.6L700.4 607.8L698.8 626L696.7 644.2L693.5 662.1L693 680.3L696.1 698.4L698.4 716.6L700.2 734.9L699.9 753.3L698.7 771.5L697.6 789.7L696.3 807.9L695.3 826.2M688.2 589.7L688.7 607.8L688.1 626L686.8 644.3L684.9 662.3L685.4 680.4L688.5 698.5L689.6 716.8L690.8 735.1L691.1 753.4L691.1 771.6L691.1 789.8L690.7 808L690.5 826.3M675.2 589.6L677.1 607.6L677.4 625.9L677 644.1L676.2 662.3L677.7 680.4L680.9 698.5L680.9 716.7L681.4 735.1L682.4 753.4L683.5 771.5L684.5 789.7L685.1 808L685.7 826.2M664.3 589.3L667.3 607.3L668.5 625.6L668.7 643.9L669 662.1L671.3 680.3L674.5 698.3L673.6 716.6L673.5 735L675 753.2L677.1 771.4L679 789.6L680.4 807.8L681.7 826.1" stroke="#a5846a" stroke-width="0.65"/>
<path d="M582 826Q593.5 826 605 826M582.1 831.3Q593.5 831.3 604.9 831.3M582.1 836.7Q593.5 836.7 604.9 836.7M582.2 842Q593.5 842 604.8 842M584.2 826L584.3 831.3L584.3 836.7L584.4 842M587.5 826L587.5 831.3L587.5 836.7L587.6 842M591.4 826L591.4 831.3L591.4 836.7L591.4 842M595.6 826L595.6 831.3L595.6 836.7L595.6 842M599.5 826L599.5 831.3L599.5 836.7L599.4 842M602.8 826L602.7 831.3L602.7 836.7L602.6 842M702 826Q690.5 826 679 826M701.9 831.3Q690.5 831.3 679.1 831.3M701.9 836.7Q690.5 836.7 679.1 836.7M701.8 842Q690.5 842 679.2 842M699.8 826L699.7 831.3L699.7 836.7L699.6 842M696.5 826L696.5 831.3L696.5 836.7L696.4 842M692.6 826L692.6 831.3L692.6 836.7L692.6 842M688.4 826L688.4 831.3L688.4 836.7L688.4 842M684.5 826L684.5 831.3L684.5 836.7L684.6 842M681.2 826L681.3 831.3L681.3 836.7L681.4 842" stroke="#ffffff" stroke-width="1.3"/>
<path d="M582.2 842Q593.2 843.8 604.8 842M579.1 848.1Q592 850.2 605.6 848.1M576 854.2Q590.8 856.6 606.4 854.3M572.9 860.3Q589.5 863 607.1 860.4M569.9 866.4Q588.3 869.5 607.7 866.6M567 872.6Q587 875.9 608.2 872.8M564 878.7Q585.7 882.3 608.6 879M561 884.9Q584.3 888.8 609 885.1M558.2 891.1Q583 895.2 609.3 891.3M555.5 897.4Q581.8 901.7 609.6 897.5M555.7 903.7Q582 908 609.7 903.7M584 842.3L581.2 848.4L578.4 854.5L575.6 860.7L572.9 866.9L570.2 873.1L567.5 879.3L564.8 885.5L562.2 891.7L559.8 898L560 904.3M586.6 842.6L584.2 848.8L581.9 854.9L579.6 861.2L577.3 867.4L575 873.6L572.6 879.9L570.3 886.1L568.1 892.4L566 898.7L566.2 905.1M589.8 842.8L588 849L586.2 855.3L584.4 861.5L582.6 867.8L580.8 874.1L579 880.4L577.1 886.7L575.3 893L573.6 899.3L573.8 905.6M593.3 842.9L592.1 849.2L591 855.4L589.8 861.7L588.6 868L587.3 874.3L586 880.6L584.7 886.9L583.4 893.2L582.2 899.6L582.3 905.8M596.9 842.8L596.4 849.1L595.8 855.3L595.2 861.6L594.6 867.9L593.9 874.2L593.1 880.5L592.3 886.7L591.5 893L590.8 899.4L590.9 905.6M600.2 842.6L600.2 848.8L600.2 855L600.2 861.3L600.1 867.5L599.9 873.8L599.6 880L599.2 886.3L598.9 892.6L598.6 898.8L598.8 905.1M602.9 842.3L603.4 848.5L603.8 854.6L604.2 860.8L604.6 867L604.8 873.2L604.9 879.5L604.9 885.7L605 891.9L605.1 898.1L605.2 904.3M701.8 842Q690.8 843.8 679.2 842M704.9 848.1Q692 850.2 678.4 848.1M708 854.2Q693.2 856.6 677.6 854.3M711.1 860.3Q694.5 863 676.9 860.4M714.1 866.4Q695.7 869.5 676.3 866.6M717 872.6Q697 875.9 675.8 872.8M720 878.7Q698.3 882.3 675.4 879M723 884.9Q699.7 888.8 675 885.1M725.8 891.1Q701 895.2 674.7 891.3M728.5 897.4Q702.2 901.7 674.4 897.5M728.3 903.7Q702 908 674.3 903.7M700 842.3L702.8 848.4L705.6 854.5L708.4 860.7L711.1 866.9L713.8 873.1L716.5 879.3L719.2 885.5L721.8 891.7L724.2 898L724 904.3M697.4 842.6L699.8 848.8L702.1 854.9L704.4 861.2L706.7 867.4L709 873.6L711.4 879.9L713.7 886.1L715.9 892.4L718 898.7L717.8 905.1M694.2 842.8L696 849L697.8 855.3L699.6 861.5L701.4 867.8L703.2 874.1L705 880.4L706.9 886.7L708.7 893L710.4 899.3L710.2 905.6M690.7 842.9L691.9 849.2L693 855.4L694.2 861.7L695.4 868L696.7 874.3L698 880.6L699.3 886.9L700.6 893.2L701.8 899.6L701.7 905.8M687.1 842.8L687.6 849.1L688.2 855.3L688.8 861.6L689.4 867.9L690.1 874.2L690.9 880.5L691.7 886.7L692.5 893L693.2 899.4L693.1 905.6M683.8 842.6L683.8 848.8L683.8 855L683.8 861.3L683.9 867.5L684.1 873.8L684.4 880L684.8 886.3L685.1 892.6L685.4 898.8L685.2 905.1M681.1 842.3L680.6 848.5L680.2 854.6L679.8 860.8L679.4 867L679.2 873.2L679.1 879.5L679.1 885.7L679 891.9L678.9 898.1L678.8 904.3" stroke="#f4efe6" stroke-width="0.9"/>
</g>

<g id="eyes"><ellipse cx="621.500" cy="250.800" rx="10" ry="5.600" fill="#1b1b86" stroke="#c9b9b0" stroke-width="1.600"/><ellipse cx="662.500" cy="250.800" rx="10" ry="5.600" fill="#1b1b86" stroke="#c9b9b0" stroke-width="1.600"/><path d="M614 250.500H629M618.500 246V255.500M625 246V255.500M655 250.500H670M660.500 246V255.500M667 246V255.500" stroke="#a8c830" stroke-width=".9" fill="none"/></g>
<path d="M642 178L638.5 190.6L642 262L645.5 190.6ZM642 262L638.5 267.7L642 300L645.5 267.7ZM642 300L638.5 306.4L642 343L645.5 306.4ZM642 343L638.5 350.8L642 395L645.5 350.8ZM642 395L638.5 401.3L642 437L645.5 401.3ZM642 437L638.5 442.7L642 475L645.5 442.7ZM642 475L638.5 480.7L642 513L645.5 480.7ZM642 343L600 333L575 340M600 333L594 337L531 437L603 338ZM531 437L526 440L480 492L533 442ZM480 492L470 520L462 560L459 590M470 520L482 558M642 513L595.7 486.4L642 486.4M595.7 486.4L590 500L598 682L601 500ZM598 682L593 700L594 850L602 700ZM594 850L588 888L598 860ZM595.7 486.4V536M612 500L642 513M642 343L684 333L709 340M684 333L690 337L753 437L681 338ZM753 437L758 440L804 492L751 442ZM804 492L814 520L822 560L825 590M814 520L802 558M642 513L688.3 486.4L642 486.4M688.3 486.4L694 500L686 682L683 500ZM686 682L691 700L690 850L682 700ZM690 850L696 888L686 860ZM688.3 486.4V536M672 500L642 513" fill="none" stroke="#0c0c14" stroke-width=".8" stroke-linejoin="round"/>
<circle cx="642" cy="513" r="2.800" fill="#050508"/><circle cx="642" cy="262" r="2.200" fill="#050508"/><circle cx="642" cy="300" r="1.800" fill="#050508"/><circle cx="642" cy="395" r="1.800" fill="#050508"/><circle cx="642" cy="437" r="1.800" fill="#050508"/><circle cx="642" cy="475" r="1.800" fill="#050508"/>
<g fill="#050508"><circle cx="598" cy="333" r="2"/><circle cx="686" cy="333" r="2"/><circle cx="595.700" cy="486.400" r="2"/><circle cx="688.600" cy="486.400" r="2"/><circle cx="598" cy="682" r="1.800"/><circle cx="695" cy="682" r="1.800"/><circle cx="588" cy="886" r="2.200"/><circle cx="696" cy="886" r="2.200"/></g>
<g stroke="#06060a" fill="none" stroke-linecap="round"><path d="M467 521L462.500 545L460.500 566L459.500 590M817 521L821.500 545L823.500 566L824.500 590" stroke-width="3" stroke-dasharray="7 2 4 1.500 9 2"/><path d="M470.500 516L466 533M813.500 516L818 533M484 528L482.500 555M800 528L801.500 555" stroke-width="1.500"/><path d="M457 546H466M456.500 569H465M458 582H464M827 546H818M827.500 569H819M826 582H820" stroke-width="1"/></g>
<path d="M745.3000000000001 481.7L753.9 490.3M753.9 481.7L745.3000000000001 490.3M690 486.400H737M654.3 482.79999999999995L661.5 490.0M661.5 482.79999999999995L654.3 490.0M642.4 678.4L649.6 685.6M649.6 678.4L642.4 685.6M600 682H634M739.4 678.4L746.6 685.6M746.6 678.4L739.4 685.6M697 682H731M560.9 322.90000000000003L565.6999999999999 327.7M565.6999999999999 322.90000000000003L560.9 327.7M568 329L582 338M505.6 408.1L510.4 412.9M510.4 408.1L505.6 412.9M512.500 414L531 427M718.9 444.1L723.6999999999999 448.9M723.6999999999999 444.1L718.9 448.9M610.5 856.5L613.5 859.5M613.5 856.5L610.5 859.5M600 851L610 857M708.5 838.5L711.5 841.5M711.5 838.5L708.5 841.5M697 848L708 841M662.5 901.0L665.5 904.0M665.5 901.0L662.5 904.0M645 904H660" fill="none" stroke="#2a2030" stroke-width=".9"/>
<g fill="#1a1420"><path d="M737.500 484L739.500 486.300L737.500 488.600L735.500 486.300Z"/><circle cx="634.500" cy="682" r="1"/><circle cx="731.500" cy="682" r="1"/></g>
<g fill="none" stroke="#2a2430" stroke-width=".9"><circle cx="642.200" cy="833.600" r="2.600"/><circle cx="642.200" cy="904.300" r="2.600"/><path d="M642.200 836L634.300 896.800L642.200 901.800L650.100 896.800Z"/></g>
</svg>
</div>
<div class="a" id="vphead" style="left:1px;top:28px;width:1322px;height:25px;background:#2f2f2f;border-radius:6px 6px 0 0">
<div class="btn" style="left:9px;top:2px;width:30px;height:20px"></div>
<svg style="left:12px;top:4px" width="18" height="17" viewBox="13 32 18 17"><g stroke="#e6e6e6" stroke-width="1.1" fill="none"><path d="M15 39.4H20.5M14 43.7H28M18.2 37.6L16.4 47M24.4 41L25.6 47"/></g><circle cx="24.5" cy="36.4" r="3.6" fill="#e6e6e6"/><circle cx="23.4" cy="35.2" r="1.5" fill="#fff"/></svg>
<svg style="left:30px;top:11px" width="8" height="5" viewBox="0 0 8 5"><path d="M0.7 0.7L4 4L7.3 0.7" fill="none" stroke="#e0e0e0" stroke-width="1.15"/></svg>
<div class="btn" style="left:46px;top:2px;width:109px;height:20px"></div>
<svg style="left:49px;top:4px" width="16" height="16" viewBox="50 32 16 16"><g fill="#f0f0f0"><rect x="50.8" y="34.5" width="1.6" height="5" rx=".7"/><rect x="53" y="33" width="2" height="8" rx=".8"/><rect x="55" y="36" width="6" height="2"/><rect x="61" y="33" width="2" height="8" rx=".8"/><rect x="63.6" y="34.5" width="1.6" height="5" rx=".7"/></g><path d="M55.3 39.5H63.5V43H62V44.500H61.5V46.8H58.500V44.500H57.2V43.500H55.3Z" fill="#a8a8a8"/></svg>
<span class="t" style="left:71px;top:6px">Weight Paint</span>
<svg style="left:142px;top:11px" width="8" height="5" viewBox="0 0 8 5"><path d="M0.7 0.7L4 4L7.3 0.7" fill="none" stroke="#e0e0e0" stroke-width="1.15"/></svg>
<div class="grp" style="left:161px;top:3px;width:38px;height:18px;background:#4f4f4f"></div>
<div class="a" style="left:179px;top:3px;width:1px;height:18px;background:#3d3d3d"></div>
<svg style="left:163px;top:5px" width="16" height="16" viewBox="0 0 16 16"><path d="M4.5 3.5V2.5Q4.5 1.5 5.5 1.5H12Q14 1.5 14 3.5V10Q14 11 13 11H12" fill="none" stroke="#d8d8d8" stroke-width="1.1"/><rect x="1.5" y="4.5" width="9.5" height="9.5" rx="1" fill="#e6e6e6"/></svg>
<svg style="left:182px;top:5px" width="16" height="16" viewBox="0 0 16 16"><path d="M4 4.5V3Q4 1.8 5.2 1.8H12Q14.2 1.8 14.2 4V11.5Q14.2 12.8 13 12.8H5.2Q4 12.8 4 11.5V9.5" fill="none" stroke="#d8d8d8" stroke-width="1.1"/><rect x="1.2" y="5" width="4" height="4" fill="#f2f2f2"/></svg>
<span class="t" style="left:212px;top:6px">View</span>
<span class="t" style="left:251px;top:6px">Weights</span>
<div class="btn" style="left:1067px;top:2px;width:31px;height:20px"></div>
<svg style="left:1069px;top:3px" width="18" height="18" viewBox="1070 31 18 18"><path d="M1073.800 36.800Q1079.400 30.600 1085 36.800Q1079.400 43 1073.800 36.800Z" fill="#e6e6e6"/><circle cx="1079.400" cy="36.600" r="2.300" fill="#282828"/><circle cx="1079.400" cy="36.600" r="1.200" fill="#e6e6e6"/><path d="M1070.800 39L1079 42.600L1075.600 43.800L1074.200 47.300Z" fill="#e6e6e6" stroke="#282828" stroke-width=".6"/></svg>
<svg style="left:1089px;top:11px" width="8" height="5" viewBox="0 0 8 5"><path d="M0.7 0.7L4 4L7.3 0.7" fill="none" stroke="#e0e0e0" stroke-width="1.15"/></svg>
<div class="a blue" style="left:1105px;top:3px;width:18px;height:18px;border-radius:4px 0 0 4px"></div>
<div class="a" style="left:1124px;top:2px;width:20px;height:20px;background:#282828;border:1px solid #3d3d3d;border-left:0;border-radius:0 4px 4px 0"></div>
<svg style="left:1105px;top:3px" width="18" height="18" viewBox="1106 31 18 18"><g fill="none" stroke="#fff" stroke-width="1.100"><path d="M1107.800 35.500Q1117.500 37 1119.200 47"/><path d="M1110.900 43.800L1121.500 34.200M1117.300 34H1121.700V38.400"/><circle cx="1109.800" cy="44.900" r="1.600"/></g></svg>
<svg style="left:1130px;top:11px" width="8" height="5" viewBox="0 0 8 5"><path d="M0.7 0.7L4 4L7.3 0.7" fill="none" stroke="#e0e0e0" stroke-width="1.15"/></svg>
<div class="a blue" style="left:1150px;top:3px;width:18px;height:18px;border-radius:4px 0 0 4px"></div>
<div class="a" style="left:1169px;top:2px;width:20px;height:20px;background:#282828;border:1px solid #3d3d3d;border-left:0;border-radius:0 4px 4px 0"></div>
<svg style="left:1150px;top:3px" width="18" height="18" viewBox="1151 31 18 18"><circle cx="1158" cy="42" r="4.300" fill="none" stroke="#fff" stroke-width="1.100"/><circle cx="1162" cy="37.700" r="4.800" fill="#fff"/><path d="M1158.500 37.800A4.300 4.300 0 0 1 1162.200 41.500" fill="none" stroke="#4772b3" stroke-width="1"/></svg>
<svg style="left:1175px;top:11px" width="8" height="5" viewBox="0 0 8 5"><path d="M0.7 0.7L4 4L7.3 0.7" fill="none" stroke="#e0e0e0" stroke-width="1.15"/></svg>
<div class="a" style="left:1195px;top:3px;width:18px;height:18px;background:#3a3a3a;border:1px solid #464646;border-radius:4px"></div>
<svg style="left:1196px;top:4px" width="16" height="16" viewBox="0 0 16 16"><g fill="none" stroke="#747474" stroke-width="1"><rect x="1.500" y="4.500" width="10" height="10" rx="1"/><path d="M4.500 4.500V2.500Q4.500 1.500 5.500 1.500H13.500Q14.500 1.500 14.500 2.500V10.500Q14.500 11.500 13.500 11.500H11.500"/><path d="M4.500 7V10.500H5.500M7.500 10.500H8.500" /></g></svg>
<div class="a" style="left:1220px;top:3px;width:76px;height:18px;background:#4f4f4f;border-radius:4px 0 0 4px"></div>
<div class="a" style="left:1238px;top:3px;width:1px;height:18px;background:#3a3a3a"></div>
<div class="a blue" style="left:1257px;top:3px;width:19px;height:18px"></div>
<div class="a" style="left:1257px;top:3px;width:1px;height:18px;background:#3a3a3a"></div>
<div class="a" style="left:1276px;top:3px;width:1px;height:18px;background:#3a3a3a"></div>
<div class="a" style="left:1296px;top:2px;width:20px;height:20px;background:#282828;border:1px solid #3d3d3d;border-left:0;border-radius:0 4px 4px 0"></div>
<svg style="left:1221px;top:4px" width="16" height="16" viewBox="1222 32 16 16"><g fill="none" stroke="#d0d0d0" stroke-width="1"><circle cx="1230" cy="40.100" r="6.500"/><path d="M1223.500 38H1236.500M1223.500 42.500H1236.500M1229.500 33.600V46.600"/></g></svg>
<svg style="left:1240px;top:4px" width="16" height="16" viewBox="1241 32 16 16"><circle cx="1249" cy="40.100" r="6.900" fill="#c0c0c0"/></svg>
<svg style="left:1259px;top:4px" width="16" height="16" viewBox="1260 32 16 16"><circle cx="1268" cy="40.100" r="6.500" fill="none" stroke="#fff" stroke-width="1.100"/><path d="M1268 33.600A6.500 6.500 0 0 0 1261.800 42L1268 40.100Z" fill="#fff"/><path d="M1261.800 42Q1264 44.500 1268 40.100L1273 45Q1268 48.500 1263.500 45Z" fill="#fff" opacity=".95"/></svg>
<svg style="left:1278px;top:4px" width="16" height="16" viewBox="1279 32 16 16"><g fill="none" stroke="#cfcfcf"><circle cx="1287" cy="40.100" r="6.500" stroke-width="1.100"/><path d="M1282.600 38.500Q1283.500 35.800 1286.500 35" stroke-width="1.300" stroke-linecap="round"/><path d="M1287 45.300L1291.800 40.500" stroke-width="2.500" stroke-dasharray="1 1" stroke="#8a8a8a"/></g></svg>
<svg style="left:1302px;top:11px" width="8" height="5" viewBox="0 0 8 5"><path d="M0.7 0.7L4 4L7.3 0.7" fill="none" stroke="#e0e0e0" stroke-width="1.15"/></svg>
</div>
<div class="a" id="toolset" style="left:1px;top:53px;width:1322px;height:26px;background:rgba(48,48,48,.72)">
<div class="a" style="left:43px;top:5px;width:31px;height:18px;background:#282828;border-radius:4px 0 0 4px"></div>
<div class="a" style="left:75px;top:5px;width:120px;height:18px;background:#1d1d1d;border-radius:0 4px 4px 0"></div>
<svg style="left:53px;top:8px;overflow:hidden" width="12" height="12" viewBox="0 0 12 12"><rect width="12" height="12" fill="#000"/><circle cx="4.800" cy="12.300" r="11.250" fill="#9a9a9a"/><path d="M4.300 4.500L6.600 3.200L9 2.700L9.900 3L9.600 5.600L7.700 6.900L6.600 7.100L5.400 8.800L3.900 9.900L3.400 7.500Z" fill="#a9a050"/><path d="M3.600 5.300L6.600 7.100L5.400 8.800L3.900 9.900L3.400 7.500Z" fill="#5e5b2a"/><path d="M0 5.600L1.300 4.700L3.900 5.100L3.400 7.500L3.900 9.900L5.400 8.800L6.400 7.700L9.200 9.200L12 9.900V12H0Z" fill="#1b2860"/></svg>
<span class="t" style="left:82px;top:8px">Draw</span>
<div class="num blue" style="left:201px;top:5px;width:126px;height:18px"></div>
<span class="t" style="left:216px;top:8px">Weight</span>
<span class="t n" style="left:282px;top:8px">1.000</span>
<div class="num" style="left:333px;top:5px;width:124px;height:18px"><div class="a blue" style="left:0;top:0;width:47px;height:18px"></div></div>
<span class="t" style="left:348px;top:8px">Radius</span>
<span class="t n" style="left:406px;top:8px">196 px</span>
<div class="a" style="left:458px;top:5px;width:19px;height:18px;background:#545454;border-radius:0 4px 4px 0"></div>
<svg style="left:461.5px;top:6px" width="16" height="16" viewBox="0 0 16 16"><g fill="none" stroke="#dcdcdc" stroke-width="1.1" stroke-linecap="round"><path d="M8.2 12.2A3 3 0 1 1 4 7.6"/><path d="M11.2 12.6A6 6 0 1 1 3.4 4.6"/></g><path d="M5.6 10.6L6 8.2L11.3 2.6Q12 2 12.8 2.7L13.6 3.6Q14.2 4.3 13.6 5L8.2 10.3Z" fill="#e6e6e6"/></svg>
<div class="num blue" style="left:483px;top:5px;width:132px;height:18px;border-radius:4px 0 0 4px"></div>
<span class="t" style="left:498px;top:8px">Strength</span>
<span class="t n" style="left:571px;top:8px">1.000</span>
<div class="a" style="left:616px;top:5px;width:20px;height:18px;background:#545454;border-radius:0 4px 4px 0"></div>
<svg style="left:619.5px;top:6px" width="16" height="16" viewBox="0 0 16 16"><g fill="none" stroke="#dcdcdc" stroke-width="1.1" stroke-linecap="round"><path d="M8.2 12.2A3 3 0 1 1 4 7.6"/><path d="M11.2 12.6A6 6 0 1 1 3.4 4.6"/></g><path d="M5.6 10.6L6 8.2L11.3 2.6Q12 2 12.8 2.7L13.6 3.6Q14.2 4.3 13.6 5L8.2 10.3Z" fill="#e6e6e6"/></svg>
<div class="a" style="left:642px;top:5px;width:51px;height:18px;background:#282828;border-radius:4px"></div>
<span class="t" style="left:649px;top:8px">Brush</span><svg style="left:682.2px;top:13px" width="8" height="5" viewBox="0 0 8 5"><path d="M0.7 0.7L4 4L7.3 0.7" fill="none" stroke="#e0e0e0" stroke-width="1.15"/></svg>
<div class="a" style="left:700px;top:5px;width:53px;height:18px;background:#282828;border-radius:4px"></div>
<span class="t" style="left:707px;top:8px">Stroke</span><svg style="left:742.5px;top:13px" width="8" height="5" viewBox="0 0 8 5"><path d="M0.7 0.7L4 4L7.3 0.7" fill="none" stroke="#e0e0e0" stroke-width="1.15"/></svg>
<div class="a" style="left:760px;top:5px;width:53px;height:18px;background:#282828;border-radius:4px"></div>
<span class="t" style="left:767px;top:8px">Falloff</span><svg style="left:802.2px;top:13px" width="8" height="5" viewBox="0 0 8 5"><path d="M0.7 0.7L4 4L7.3 0.7" fill="none" stroke="#e0e0e0" stroke-width="1.15"/></svg>
<div class="a" style="left:819px;top:5px;width:55px;height:18px;background:#282828;border-radius:4px"></div>
<span class="t" style="left:826px;top:8px">Cursor</span><svg style="left:863.5px;top:13px" width="8" height="5" viewBox="0 0 8 5"><path d="M0.7 0.7L4 4L7.3 0.7" fill="none" stroke="#e0e0e0" stroke-width="1.15"/></svg>
<svg style="left:1159px;top:6px" width="16" height="16" viewBox="0 0 16 16"><g fill="none" stroke="#c8c8c8" stroke-width="1"><path d="M6 3Q2 0.5 1.5 3.5Q1.3 6 4 7.5Q1 9 2 12Q3.5 14.5 6 12"/><path d="M10 3Q14 0.5 14.5 3.5Q14.7 6 12 7.5Q15 9 14 12Q12.500 14.500 10 12"/><path d="M8 0.5V15.500" stroke-dasharray="2 1.500" stroke="#e6e6e6"/></g></svg>
<div class="a blue" style="left:1178px;top:5px;width:15px;height:18px;border-radius:4px 0 0 4px"></div>
<div class="a" style="left:1194px;top:5px;width:16px;height:18px;background:rgba(84,84,84,.75)"></div>
<div class="a" style="left:1211px;top:5px;width:16px;height:18px;background:rgba(84,84,84,.75)"></div>
<div class="a" style="left:1227px;top:5px;width:19px;height:18px;background:#282828;border-radius:0 4px 4px 0"></div>
<span class="t" style="left:1182px;top:8px;color:#fff">X</span>
<span class="t dim" style="left:1198px;top:8px">Y</span>
<span class="t dim" style="left:1215px;top:8px">Z</span>
<svg style="left:1232px;top:13px" width="8" height="5" viewBox="0 0 8 5"><path d="M0.7 0.7L4 4L7.3 0.7" fill="none" stroke="#e0e0e0" stroke-width="1.15"/></svg>
<div class="a" style="left:1253px;top:5px;width:61px;height:18px;background:#282828;border-radius:4px"></div>
<span class="t" style="left:1260px;top:8px">Options</span><svg style="left:1304.5px;top:13px" width="8" height="5" viewBox="0 0 8 5"><path d="M0.7 0.7L4 4L7.3 0.7" fill="none" stroke="#e0e0e0" stroke-width="1.15"/></svg>
</div>
<!-- LEFT TOOLBAR -->
<div class="a" style="left:8px;top:87px;width:40px;height:175px;background:#282828;border-radius:5px;border:1px solid #343434;overflow:hidden">
<div class="a" style="left:0;top:0;width:40px;height:34px;background:#4772b3"></div>
<div class="a" style="left:0;top:68px;width:40px;height:1px;background:#3a3a3a"></div>
<div class="a" style="left:0;top:103px;width:40px;height:1px;background:#3a3a3a"></div>
<div class="a" style="left:0;top:138px;width:40px;height:1px;background:#3a3a3a"></div>
</div>
<div class="a" style="left:8px;top:267px;width:40px;height:35px;background:#282828;border-radius:5px;border:1px solid #343434"></div>
<div class="a" style="left:8px;top:312px;width:40px;height:35px;background:#282828;border-radius:5px;border:1px solid #343434"></div>
<svg style="left:0;top:0" width="60" height="360" viewBox="0 0 60 360">
<!-- draw brush -->
<path d="M18.800 112Q22 114.300 26.500 111.800Q31 108.800 36 109.600Q32 110.600 29 113Q23.500 117 18.800 112Z" fill="#909090"/>
<path d="M35.300 95L26.300 105.300" stroke="#ececec" stroke-width="3" stroke-linecap="round" fill="none"/>
<path d="M24.200 103.800L27.500 106.800Q27 111 21.800 111.200Q18.200 111 17.300 108.800Q21.500 108 24.200 103.800Z" fill="#ececec"/>
<!-- drop -->
<path d="M20.700 138.300Q19.800 146.300 27.500 147Q33.200 146.700 35.300 140.600L35.100 139.200L33.500 140Q31.500 145 27.500 144.900Q22.600 144.600 22 139.500Z" fill="#8f8f8f"/>
<path d="M28.200 130C30 133.500 33 136.500 33 139.200A4.800 4.800 0 0 1 23.400 139.200C23.400 136.500 26.400 133.500 28.200 130Z" fill="#e8e8e8"/>
<!-- blur -->
<circle cx="28" cy="174" r="4.300" fill="#ececec"/>
<g fill="#bdbdbd"><circle cx="21.500" cy="167.600" r=".9"/><circle cx="25.800" cy="167.600" r=".9"/><circle cx="30.200" cy="167.600" r=".9"/><circle cx="34.500" cy="167.600" r=".9"/><circle cx="21.500" cy="180.400" r=".9"/><circle cx="25.800" cy="180.400" r=".9"/><circle cx="30.200" cy="180.400" r=".9"/><circle cx="34.500" cy="180.400" r=".9"/><circle cx="21.300" cy="171.900" r=".9"/><circle cx="21.300" cy="176.200" r=".9"/><circle cx="34.700" cy="171.900" r=".9"/><circle cx="34.700" cy="176.200" r=".9"/><circle cx="19.300" cy="171.900" r=".5"/><circle cx="19.300" cy="176.200" r=".5"/><circle cx="36.700" cy="171.900" r=".5"/><circle cx="36.700" cy="176.200" r=".5"/><circle cx="25.800" cy="165.600" r=".5"/><circle cx="30.200" cy="165.600" r=".5"/><circle cx="25.800" cy="182.400" r=".5"/><circle cx="30.200" cy="182.400" r=".5"/></g>
<!-- smear -->
<ellipse cx="26" cy="216.300" rx="5.500" ry="1.500" fill="#8a8a8a"/>
<path d="M24.500 203Q27 198.500 31 199.500L34 203V208L31.500 210.500L30 207.500L23 214.500L21 212.500L27.500 205.500Z" fill="#ececec"/>
<!-- gradient -->
<defs><linearGradient id="gg" x1="0" y1="1" x2="1" y2="0"><stop offset="0" stop-color="#000" stop-opacity="0"/><stop offset="1" stop-color="#f4f4f4"/></linearGradient></defs>
<path d="M21 248L31 237.500Q34.500 235.500 36.300 238.300L36 243L26 253Z" fill="url(#gg)"/>
<path d="M19.800 253L37 235.600" stroke="#ececec" stroke-width="1"/>
<circle cx="19.800" cy="253" r="1.300" fill="#ececec"/><circle cx="37" cy="235.600" r="1.300" fill="#ececec"/>
<!-- eyedropper -->
<ellipse cx="23.500" cy="290" rx="5.300" ry="3.400" fill="#8c8c8c"/>
<path d="M35 274.300Q37.300 274 37.800 276.300Q37.800 278.500 35.800 279.300L34.500 280.500L32 278L33 276.500Q33.500 274.800 35 274.300Z" fill="#ececec"/>
<path d="M30.300 277.300L34.800 281.800" stroke="#ececec" stroke-width="2"/>
<path d="M31.500 280L24.500 287.500L23.300 290L26 289L33.500 282" fill="none" stroke="#e0e0e0" stroke-width="1.100"/>
<path d="M43.500 298.500V294.500L39.500 298.500Z" fill="#7a7a7a"/>
<!-- annotate -->
<path d="M17 336.300Q21 339.500 26 337Q31 332 36 331.500Q40 331.800 41 337.500" fill="none" stroke="#7fd9a3" stroke-width="1.200"/>
<path d="M30 319.500L33.800 323.300L21 335.300L17 336L17.600 332Z" fill="#ececec"/>
<path d="M30.800 318.700L32.200 317.300Q33 316.700 33.800 317.500L35.600 319.300Q36.300 320.100 35.600 321L34.400 322.400Z" fill="#ececec"/>
<path d="M43.500 343.500V339.500L39.500 343.500Z" fill="#7a7a7a"/>
</svg>
<!-- STATS -->
<span class="t st" style="left:65px;top:100px">Vertices</span><span class="t st" style="left:119px;top:100px">3,527</span>
<span class="t st" style="left:65px;top:118px">Edges</span><span class="t st" style="left:119px;top:118px">6,884</span>
<span class="t st" style="left:65px;top:136px">Faces</span><span class="t st" style="left:119px;top:136px">3,380</span>
<span class="t st" style="left:65px;top:154px">Triangles</span><span class="t st" style="left:119px;top:154px">6,614</span>
<!-- N PANEL -->
<div class="a" style="left:1303px;top:80px;width:23px;height:844px;background:#1a1a1a"></div>
<div class="a" style="left:1303px;top:84px;width:17px;height:39px;background:#252525;border:1px solid #333;border-left:0;border-radius:0 4px 4px 0"></div>
<div class="a" style="left:1303px;top:127px;width:17px;height:36px;background:#363636;border:1px solid #404040;border-left:0;border-radius:0 4px 4px 0"></div>
<div class="a" style="left:1303px;top:167px;width:17px;height:40px;background:#252525;border:1px solid #333;border-left:0;border-radius:0 4px 4px 0"></div>
<span class="t rot dim" style="left:1305px;top:115px;color:#c8c8c8">Item</span>
<span class="t rot" style="left:1305px;top:155px;color:#fff">Tool</span>
<span class="t rot dim" style="left:1305px;top:199px;color:#c8c8c8">View</span>
<div class="panel" style="left:1029px;top:81px;width:267px;height:69px"></div>
<svg style="left:1037px;top:91px" width="9" height="6" viewBox="0 0 9 6"><path d="M0.6 0.6L4.5 4.6L8.400 0.600" fill="none" stroke="#d0d0d0" stroke-width="1.100"/></svg><span class="t" style="left:1051px;top:88px">Active Tool</span><svg style="left:1279px;top:92px" width="11" height="5" viewBox="0 0 11 5"><g fill="#8c8c8c"><rect x="0" y="0" width="1.500" height="1.500"/><rect x="3" y="0" width="1.500" height="1.500"/><rect x="6" y="0" width="1.500" height="1.500"/><rect x="9" y="0" width="1.500" height="1.500"/><rect x="0" y="3" width="1.500" height="1.500"/><rect x="3" y="3" width="1.500" height="1.500"/><rect x="6" y="3" width="1.500" height="1.500"/><rect x="9" y="3" width="1.500" height="1.500"/></g></svg>
<svg style="left:1043px;top:113px" width="22" height="22" viewBox="1043 113 22 22"><path d="M1045.800 131.500Q1049 133.800 1053.500 131.300Q1058 128.300 1063 129.100Q1059 130.100 1056 132.500Q1050.500 136.500 1045.800 131.500Z" fill="#8c8c8c"/><path d="M1062.300 115L1053.300 125.300" stroke="#e4e4e4" stroke-width="3" stroke-linecap="round" fill="none"/><path d="M1051.200 123.800L1054.500 126.800Q1054 131 1048.800 131.200Q1045.200 131 1044.300 128.800Q1048.500 128 1051.200 123.800Z" fill="#e4e4e4"/></svg>
<span class="t" style="left:1075px;top:118px;color:#d0d0d0">Draw</span>
<div class="panel" style="left:1029px;top:152px;width:267px;height:180px"></div>
<svg style="left:1037px;top:162px" width="9" height="6" viewBox="0 0 9 6"><path d="M0.6 0.6L4.5 4.6L8.400 0.600" fill="none" stroke="#d0d0d0" stroke-width="1.100"/></svg><span class="t" style="left:1051px;top:159px">Brushes</span><svg style="left:1279px;top:163px" width="11" height="5" viewBox="0 0 11 5"><g fill="#8c8c8c"><rect x="0" y="0" width="1.500" height="1.500"/><rect x="3" y="0" width="1.500" height="1.500"/><rect x="6" y="0" width="1.500" height="1.500"/><rect x="9" y="0" width="1.500" height="1.500"/><rect x="0" y="3" width="1.500" height="1.500"/><rect x="3" y="3" width="1.500" height="1.500"/><rect x="6" y="3" width="1.500" height="1.500"/><rect x="9" y="3" width="1.500" height="1.500"/></g></svg>
<div class="a" style="left:1038px;top:186px;width:221px;height:119px;background:#282828;border-radius:4px 4px 0 0"></div>
<svg style="left:1092px;top:189px;overflow:hidden" width="112" height="112" viewBox="0 0 112 112"><defs><radialGradient id="sph" cx="45" cy="85" r="105" gradientUnits="userSpaceOnUse"><stop offset="0" stop-color="#a9a9a9"/><stop offset=".75" stop-color="#8e8e8e"/><stop offset=".95" stop-color="#5a5a5a"/><stop offset="1" stop-color="#222"/></radialGradient><linearGradient id="blu" x1="0" y1="0" x2="0" y2="1"><stop offset="0" stop-color="#1f2f68"/><stop offset="1" stop-color="#151f4a"/></linearGradient><filter id="bl"><feGaussianBlur stdDeviation="1.6"/></filter></defs><rect width="112" height="112" fill="#000"/><circle cx="45" cy="115" r="105" fill="url(#sph)"/><g filter="url(#bl)"><path d="M-5 52L12 44L36 48L60 72L86 86L118 92V120H-5Z" fill="url(#blu)"/><path d="M40 42L62 30L84 25L92 28L90 52L72 64L62 66L50 82L36 92L32 70Z" fill="#a9a050"/><path d="M34 50L62 66L50 82L36 92L32 70Z" fill="#5e5b2a"/></g></svg>
<div class="a" style="left:1038px;top:305px;width:133px;height:19px;background:#1d1d1d;border-radius:0 0 0 4px"></div>
<span class="t" style="left:1044px;top:308px">Draw</span>
<div class="a" style="left:1172px;top:305px;width:28px;height:19px;background:#545454"></div>
<span class="t" style="left:1182px;top:308px">4</span>
<div class="a blue" style="left:1200px;top:305px;width:19px;height:19px"></div>
<svg style="left:1201px;top:306px" width="17" height="17" viewBox="0 0 17 17"><path d="M8.500 1.500Q11 3.300 14.500 3.300V8Q14.500 12.500 8.500 15.500Q2.500 12.500 2.500 8V3.300Q6 3.300 8.500 1.500Z" fill="#fff"/><path d="M5.500 8.300L7.700 10.500L11.700 6" fill="none" stroke="#4772b3" stroke-width="1.600"/></svg>
<div class="a" style="left:1220px;top:305px;width:19px;height:19px;background:#545454"></div>
<svg style="left:1221px;top:306px" width="17" height="17" viewBox="0 0 17 17"><g fill="none" stroke="#e0e0e0" stroke-width="1.100"><path d="M5.500 5V2.500H11.500L14.500 5.500V11.500H11"/><path d="M11.500 2.500V5.500H14.500"/><rect x="2.500" y="5.500" width="8.500" height="9" rx=".8"/></g></svg>
<div class="a" style="left:1240px;top:305px;width:19px;height:19px;background:#545454;border-radius:0 0 4px 0"></div>
<svg style="left:1245px;top:310px" width="9" height="9" viewBox="0 0 9 9"><path d="M0.700 0.700L8.300 8.300M8.300 0.700L0.700 8.300" stroke="#e0e0e0" stroke-width="1.200"/></svg>
<div class="a" style="left:1269px;top:186px;width:18px;height:18px;background:#282828;border-radius:4px"></div>
<svg style="left:1274px;top:193px" width="9" height="6" viewBox="0 0 9 6"><path d="M0.6 0.6L4.5 4.6L8.400 0.600" fill="none" stroke="#e6e6e6" stroke-width="1.100"/></svg>
<div class="a" style="left:1269px;top:208px;width:18px;height:18px;background:#545454;border-radius:4px"></div>
<svg style="left:1270px;top:209px" width="16" height="16" viewBox="0 0 16 16"><rect x="1.500" y="1.500" width="13" height="13" rx="1.500" fill="none" stroke="#e6e6e6" stroke-width="1.100"/><path d="M2 14L7.500 6.500L12 14Z" fill="#e6e6e6"/><circle cx="11" cy="5" r="1.400" fill="#e6e6e6"/></svg>
<div class="panel" style="left:1029px;top:335px;width:267px;height:242px"></div>
<svg style="left:1037px;top:345px" width="9" height="6" viewBox="0 0 9 6"><path d="M0.6 0.6L4.5 4.6L8.400 0.600" fill="none" stroke="#d0d0d0" stroke-width="1.100"/></svg><span class="t" style="left:1051px;top:342px">Brush Settings</span><svg style="left:1279px;top:346px" width="11" height="5" viewBox="0 0 11 5"><g fill="#8c8c8c"><rect x="0" y="0" width="1.500" height="1.500"/><rect x="3" y="0" width="1.500" height="1.500"/><rect x="6" y="0" width="1.500" height="1.500"/><rect x="9" y="0" width="1.500" height="1.500"/><rect x="0" y="3" width="1.500" height="1.500"/><rect x="3" y="3" width="1.500" height="1.500"/><rect x="6" y="3" width="1.500" height="1.500"/><rect x="9" y="3" width="1.500" height="1.500"/></g></svg>
<span class="t " style="right:193px;top:372px">Blend</span>
<div class="a" style="left:1143px;top:369px;width:144px;height:18px;background:#282828;border-radius:4px;box-shadow:0 1px 0 #333"></div>
<span class="t" style="left:1150px;top:372px">Mix</span>
<svg style="left:1278px;top:376px" width="8" height="5" viewBox="0 0 8 5"><path d="M0.7 0.7L4 4L7.3 0.7" fill="none" stroke="#e0e0e0" stroke-width="1.15"/></svg>
<span class="t " style="right:193px;top:402px">Weight</span>
<div class="a blue" style="left:1143px;top:399px;width:124px;height:18px;border-radius:4px 0 0 4px"></div>
<span class="t" style="left:1143px;top:402px;width:124px;text-align:center;letter-spacing:-0.25px">1.000</span>
<div class="a blue" style="left:1268px;top:399px;width:19px;height:18px;border-radius:0 4px 4px 0"></div><svg style="left:1270px;top:400px" width="16" height="16" viewBox="0 0 16 16"><g fill="#fff"><path d="M2 1.500H3.500V3H4.500V1.500H6V3H7V1.500H8.500V5.500H2Z"/><path d="M2 7H8.500V8.800H6.200V14.500H4.300V8.800H2Z"/><rect x="11" y="1.500" width="1.700" height="8"/><path d="M12.800 10.500Q13.500 13.500 10 14.300Q8.800 14.300 8.600 13.500Q10.500 12.500 11 10.500Z"/></g></svg>
<span class="t " style="right:193px;top:424px">Radius</span>
<div class="a" style="left:1143px;top:421px;width:104px;height:18px;background:#545454;border-radius:4px 0 0 4px;overflow:hidden"><div class="a blue" style="left:0;top:0;width:39px;height:18px"></div></div>
<span class="t" style="left:1143px;top:424px;width:104px;text-align:center;letter-spacing:-0.25px">196 px</span>
<div class="a" style="left:1248px;top:421px;width:19px;height:18px;background:#545454"></div><svg style="left:1250.5px;top:422px" width="16" height="16" viewBox="0 0 16 16"><g fill="none" stroke="#dcdcdc" stroke-width="1.1" stroke-linecap="round"><path d="M8.2 12.2A3 3 0 1 1 4 7.6"/><path d="M11.2 12.6A6 6 0 1 1 3.4 4.6"/></g><path d="M5.6 10.6L6 8.2L11.3 2.6Q12 2 12.8 2.7L13.6 3.6Q14.2 4.3 13.6 5L8.2 10.3Z" fill="#e6e6e6"/></svg>
<div class="a blue" style="left:1268px;top:421px;width:19px;height:18px;border-radius:0 4px 4px 0"></div><svg style="left:1270px;top:422px" width="16" height="16" viewBox="0 0 16 16"><g fill="#fff"><path d="M2 1.500H3.500V3H4.500V1.500H6V3H7V1.500H8.500V5.500H2Z"/><path d="M2 7H8.500V8.800H6.200V14.500H4.300V8.800H2Z"/><rect x="11" y="1.500" width="1.700" height="8"/><path d="M12.800 10.500Q13.500 13.500 10 14.300Q8.800 14.300 8.600 13.500Q10.500 12.500 11 10.500Z"/></g></svg>
<span class="t " style="right:193px;top:446px">Strength</span>
<div class="a blue" style="left:1143px;top:443px;width:104px;height:18px;border-radius:4px 0 0 4px"></div>
<span class="t" style="left:1143px;top:446px;width:104px;text-align:center;letter-spacing:-0.25px">1.000</span>
<div class="a" style="left:1248px;top:443px;width:19px;height:18px;background:#545454"></div><svg style="left:1250.5px;top:444px" width="16" height="16" viewBox="0 0 16 16"><g fill="none" stroke="#dcdcdc" stroke-width="1.1" stroke-linecap="round"><path d="M8.2 12.2A3 3 0 1 1 4 7.6"/><path d="M11.2 12.6A6 6 0 1 1 3.4 4.6"/></g><path d="M5.6 10.6L6 8.2L11.3 2.6Q12 2 12.8 2.7L13.6 3.6Q14.2 4.3 13.6 5L8.2 10.3Z" fill="#e6e6e6"/></svg>
<div class="a" style="left:1268px;top:443px;width:19px;height:18px;background:#545454;border-radius:0 4px 4px 0"></div><svg style="left:1270px;top:444px" width="16" height="16" viewBox="0 0 16 16"><g fill="#fff"><path d="M2 1.500H3.500V3H4.500V1.500H6V3H7V1.500H8.500V5.500H2Z"/><path d="M2 7H8.500V8.800H6.200V14.500H4.300V8.800H2Z"/><rect x="11" y="1.500" width="1.700" height="8"/><path d="M12.800 10.500Q13.500 13.500 10 14.300Q8.800 14.300 8.600 13.500Q10.500 12.500 11 10.500Z"/></g></svg>
<svg style="left:1054px;top:487px" width="6" height="9" viewBox="0 0 6 9"><path d="M0.600 0.600L4.600 4.500L0.600 8.400" fill="none" stroke="#d0d0d0" stroke-width="1.100"/></svg><span class="t" style="left:1065px;top:485px">Advanced</span>
<svg style="left:1054px;top:512px" width="6" height="9" viewBox="0 0 6 9"><path d="M0.600 0.600L4.600 4.500L0.600 8.400" fill="none" stroke="#d0d0d0" stroke-width="1.100"/></svg><span class="t" style="left:1065px;top:510px">Stroke</span>
<svg style="left:1054px;top:537px" width="6" height="9" viewBox="0 0 6 9"><path d="M0.600 0.600L4.600 4.500L0.600 8.400" fill="none" stroke="#d0d0d0" stroke-width="1.100"/></svg><span class="t" style="left:1065px;top:535px">Falloff</span>
<svg style="left:1054px;top:562px" width="6" height="9" viewBox="0 0 6 9"><path d="M0.600 0.600L4.600 4.500L0.600 8.400" fill="none" stroke="#d0d0d0" stroke-width="1.100"/></svg><div class="a blue" style="left:1064px;top:559px;width:13px;height:13px;border-radius:3px"></div><svg style="left:1064px;top:559px" width="13" height="13" viewBox="0 0 13 13"><path d="M2.500 6.200L5 8.700L9.700 3.300" fill="none" stroke="#fff" stroke-width="1.700"/></svg><span class="t" style="left:1080px;top:560px">Cursor</span>
<div class="panel" style="left:1029px;top:580px;width:267px;height:175px"></div>
<svg style="left:1037px;top:590px" width="9" height="6" viewBox="0 0 9 6"><path d="M0.6 0.6L4.5 4.6L8.400 0.600" fill="none" stroke="#d0d0d0" stroke-width="1.100"/></svg><span class="t" style="left:1051px;top:587px">Symmetry</span><svg style="left:1279px;top:591px" width="11" height="5" viewBox="0 0 11 5"><g fill="#8c8c8c"><rect x="0" y="0" width="1.500" height="1.500"/><rect x="3" y="0" width="1.500" height="1.500"/><rect x="6" y="0" width="1.500" height="1.500"/><rect x="9" y="0" width="1.500" height="1.500"/><rect x="0" y="3" width="1.500" height="1.500"/><rect x="3" y="3" width="1.500" height="1.500"/><rect x="6" y="3" width="1.500" height="1.500"/><rect x="9" y="3" width="1.500" height="1.500"/></g></svg>
<div class="a blue" style="left:1143px;top:617px;width:13px;height:13px;border-radius:3px"></div><svg style="left:1143px;top:617px" width="13" height="13" viewBox="0 0 13 13"><path d="M2.500 6.200L5 8.700L9.700 3.300" fill="none" stroke="#fff" stroke-width="1.700"/></svg><span class="t" style="left:1159px;top:617px">Mirror Vertex Groups</span>
<span class="t " style="right:193px;top:642px">Mirror</span>
<div class="a blue" style="left:1143px;top:639px;width:46px;height:18px;border-radius:4px 0 0 4px"></div>
<div class="a" style="left:1190px;top:639px;width:48px;height:18px;background:#4a4a4a"></div>
<div class="a" style="left:1239px;top:639px;width:48px;height:18px;background:#4a4a4a;border-radius:0 4px 4px 0"></div>
<span class="t" style="left:1143px;top:642px;width:46px;text-align:center;color:#fff">X</span>
<span class="t" style="left:1190px;top:642px;width:48px;text-align:center;color:#9a9a9a">Y</span>
<span class="t" style="left:1239px;top:642px;width:48px;text-align:center;color:#9a9a9a">Z</span>
<span class="t" style="right:193px;top:667px;color:#858585">Radial X</span>
<div class="a" style="left:1143px;top:664px;width:144px;height:18px;background:#484848;border-radius:4px 4px 0 0"></div>
<span class="t" style="left:1143px;top:667px;width:144px;text-align:center;color:#8e8e8e">1</span>
<span class="t" style="right:193px;top:687px;color:#858585">Y</span>
<div class="a" style="left:1143px;top:684px;width:144px;height:18px;background:#484848;border-radius:0"></div>
<span class="t" style="left:1143px;top:687px;width:144px;text-align:center;color:#8e8e8e">1</span>
<span class="t" style="right:193px;top:707px;color:#858585">Z</span>
<div class="a" style="left:1143px;top:704px;width:144px;height:18px;background:#484848;border-radius:0 0 4px 4px"></div>
<span class="t" style="left:1143px;top:707px;width:144px;text-align:center;color:#8e8e8e">1</span>
<div class="a" style="left:1143px;top:732px;width:13px;height:13px;border-radius:3px;background:#545454;border:1px solid #3d3d3d"></div><span class="t" style="left:1159px;top:732px">Topology Mirror</span>
<div class="panel" style="left:1029px;top:758px;width:267px;height:24px"></div>
<svg style="left:1039px;top:767px" width="6" height="9" viewBox="0 0 6 9"><path d="M0.600 0.600L4.600 4.500L0.600 8.400" fill="none" stroke="#d0d0d0" stroke-width="1.100"/></svg><span class="t" style="left:1051px;top:765px">Options</span><svg style="left:1279px;top:769px" width="11" height="5" viewBox="0 0 11 5"><g fill="#8c8c8c"><rect x="0" y="0" width="1.500" height="1.500"/><rect x="3" y="0" width="1.500" height="1.500"/><rect x="6" y="0" width="1.500" height="1.500"/><rect x="9" y="0" width="1.500" height="1.500"/><rect x="0" y="3" width="1.500" height="1.500"/><rect x="3" y="3" width="1.500" height="1.500"/><rect x="6" y="3" width="1.500" height="1.500"/><rect x="9" y="3" width="1.500" height="1.500"/></g></svg>
<div class="panel" style="left:1029px;top:786px;width:267px;height:24px"></div>
<svg style="left:1039px;top:794px" width="6" height="9" viewBox="0 0 6 9"><path d="M0.600 0.600L4.600 4.500L0.600 8.400" fill="none" stroke="#d0d0d0" stroke-width="1.100"/></svg><span class="t" style="left:1051px;top:792px">Workspace</span><svg style="left:1279px;top:796px" width="11" height="5" viewBox="0 0 11 5"><g fill="#8c8c8c"><rect x="0" y="0" width="1.500" height="1.500"/><rect x="3" y="0" width="1.500" height="1.500"/><rect x="6" y="0" width="1.500" height="1.500"/><rect x="9" y="0" width="1.500" height="1.500"/><rect x="0" y="3" width="1.500" height="1.500"/><rect x="3" y="3" width="1.500" height="1.500"/><rect x="6" y="3" width="1.500" height="1.500"/><rect x="9" y="3" width="1.500" height="1.500"/></g></svg>
<!-- RED ANNOTATION ARROWS -->
<svg style="left:0;top:0" width="1326" height="1018" viewBox="0 0 1326 1018"><g fill="none" stroke="#ff0000" stroke-width="3.100" stroke-linecap="round" stroke-linejoin="round"><path d="M977.400 374Q1028 374.600 1066 375.500L1080.500 376.800"/><path d="M1056.600 358.500Q1061 366 1075 373.300L1081.400 377Q1071 382 1054 390.700"/><path d="M885 589.200Q951 590.200 992 590.600L1023.500 592"/><path d="M992.800 567.200Q998 578 1012.500 587.600L1024.700 592.300Q1006 602 988.100 610.900"/></g></svg>
<!-- ACTION EDITOR -->
<div class="a" style="left:1px;top:927px;width:1322px;height:26px;background:#2f2f2f;border-radius:6px 6px 0 0"></div>
<div class="a" style="left:1px;top:953px;width:1322px;height:19px;background:#1d1d1d;border-radius:0 0 6px 6px"></div>
<div class="btn" style="left:9px;top:930px;width:30px;height:20px"></div>
<svg style="left:12px;top:932px" width="16" height="16" viewBox="0 0 16 16"><path d="M3 1L5.500 3.500L3 6L0.500 3.500Z M13 1L15.500 3.500L13 6L10.500 3.500Z" fill="#e6e6e6"/><path d="M5 1.800H11L9.500 3.500L11 5.200H5L6.500 3.500Z" fill="#a0a0a0"/><path d="M8 8.500L11 11.500L8 14.500L5 11.500Z" fill="none" stroke="#e6e6e6" stroke-width="1.100"/></svg>
<svg style="left:29px;top:939px" width="8" height="5" viewBox="0 0 8 5"><path d="M0.7 0.7L4 4L7.3 0.7" fill="none" stroke="#e0e0e0" stroke-width="1.15"/></svg>
<div class="btn" style="left:45px;top:930px;width:123px;height:20px"></div>
<svg style="left:48px;top:932px" width="16" height="16" viewBox="0 0 16 16"><rect x="4.500" y="4.500" width="7" height="7" fill="#e6e6e6"/><path d="M1.500 5V2.500Q1.500 1.500 2.500 1.500H5M11 1.500H13.500Q14.500 1.500 14.500 2.500V5M14.500 11V13.500Q14.500 14.500 13.500 14.500H11M5 14.500H2.500Q1.500 14.500 1.500 13.500V11" fill="none" stroke="#e6e6e6" stroke-width="1.100"/></svg>
<span class="t" style="left:71px;top:934px">Action Editor</span>
<svg style="left:156px;top:939px" width="8" height="5" viewBox="0 0 8 5"><path d="M0.7 0.7L4 4L7.3 0.7" fill="none" stroke="#e0e0e0" stroke-width="1.15"/></svg>
<span class="t" style="left:180px;top:934px">View</span>
<span class="t" style="left:219px;top:934px">Select</span>
<span class="t" style="left:265px;top:934px">Marker</span>
<span class="t" style="left:314px;top:934px">Key</span>
<div class="a" style="left:346px;top:931px;width:37px;height:18px;background:#3d3d3d;border-radius:4px"></div>
<div class="a" style="left:364px;top:931px;width:1px;height:18px;background:#303030"></div>
<svg style="left:346px;top:931px" width="37" height="18" viewBox="0 0 37 18"><path d="M5 6.500H13L9 12Z M24 11.500H32L28 6Z" fill="#707070"/></svg>
<div class="a" style="left:391px;top:931px;width:87px;height:18px;background:#3d3d3d;border-radius:4px 0 0 4px"></div>
<div class="a" style="left:479px;top:931px;width:61px;height:18px;background:#3d3d3d;border-radius:0 4px 4px 0"></div>
<svg style="left:394px;top:932px" width="16" height="16" viewBox="0 0 16 16"><path d="M4.500 1H8.500L6.500 4.500Z" fill="#777"/><path d="M4.500 5V7M4.500 7.500H12.500V10.500H1.500V13.500H9.500V10.500" fill="none" stroke="#777" stroke-width="1"/></svg>
<span class="t" style="left:415px;top:934px;color:#8c8c8c">Push Down</span>
<svg style="left:482px;top:932px" width="16" height="16" viewBox="0 0 16 16"><path d="M8 1V15M1 8H15M3 3L13 13M13 3L3 13" stroke="#777" stroke-width="1"/></svg>
<span class="t" style="left:504px;top:934px;color:#8c8c8c">Stash</span>
<div class="a" style="left:575px;top:930px;width:32px;height:20px;background:#282828;border:1px solid #3d3d3d;border-right:0;border-radius:4px 0 0 4px"></div>
<svg style="left:578px;top:932px" width="16" height="16" viewBox="0 0 16 16"><path d="M3 1L5.500 3.500L3 6L0.500 3.500Z M13 1L15.500 3.500L13 6L10.500 3.500Z" fill="#e6e6e6"/><path d="M5 1.800H11L9.500 3.500L11 5.200H5L6.500 3.500Z" fill="#a0a0a0"/><path d="M8 8.500L11 11.500L8 14.500L5 11.500Z" fill="none" stroke="#e6e6e6" stroke-width="1.100"/></svg>
<svg style="left:595px;top:939px" width="8" height="5" viewBox="0 0 8 5"><path d="M0.7 0.7L4 4L7.3 0.7" fill="none" stroke="#e0e0e0" stroke-width="1.15"/></svg>
<div class="a" style="left:607px;top:931px;width:119px;height:18px;background:#545454;border-radius:0 4px 4px 0"></div>
<svg style="left:614px;top:935px" width="10" height="10" viewBox="0 0 10 10"><path d="M5 0.500V9.500M0.500 5H9.500" stroke="#e6e6e6" stroke-width="1.200"/></svg>
<span class="t" style="left:664px;top:934px">New</span>
<div class="a blue" style="left:1046px;top:931px;width:18px;height:18px;border-radius:4px 0 0 4px"></div>
<div class="a blue" style="left:1065px;top:931px;width:19px;height:18px"></div>
<div class="a" style="left:1085px;top:931px;width:19px;height:18px;background:#545454;border-radius:0 4px 4px 0"></div>
<svg style="left:1047px;top:932px" width="16" height="16" viewBox="0 0 16 16"><path d="M3.500 2L13 7.800L8.800 8.800L7 13.500Z" fill="#fff"/></svg>
<svg style="left:1066px;top:932px" width="16" height="16" viewBox="0 0 16 16"><g fill="none" stroke="#fff" stroke-width="1.200"><path d="M1.500 5V1.500H5M11 1.500H14.500V5M14.500 11V14.500H11M5 14.500H1.500V11"/><rect x="4.500" y="4.500" width="7" height="7" stroke-dasharray="2 1.300" stroke-width="1"/></g></svg>
<svg style="left:1086px;top:932px" width="16" height="16" viewBox="0 0 16 16"><path d="M8 1L15.500 14.500H0.500Z" fill="#eee" stroke="#eee" stroke-linejoin="round" stroke-width="1"/><path d="M8 5V10" stroke="#545454" stroke-width="1.800"/><circle cx="8" cy="12.300" r="1" fill="#545454"/></svg>
<div class="btn" style="left:1110px;top:930px;width:32px;height:20px"></div>
<svg style="left:1113px;top:932px" width="16" height="16" viewBox="0 0 16 16"><path d="M1.500 1.500H14.500L9.500 8V14.500L6.500 12.500V8Z" fill="none" stroke="#e6e6e6" stroke-width="1.200" stroke-linejoin="round"/></svg>
<svg style="left:1131px;top:939px" width="8" height="5" viewBox="0 0 8 5"><path d="M0.7 0.7L4 4L7.3 0.7" fill="none" stroke="#e0e0e0" stroke-width="1.15"/></svg>
<div class="btn" style="left:1147px;top:930px;width:112px;height:20px"></div>
<span class="t" style="left:1155px;top:934px">Nearest Frame</span>
<svg style="left:1249px;top:939px" width="8" height="5" viewBox="0 0 8 5"><path d="M0.7 0.7L4 4L7.3 0.7" fill="none" stroke="#e0e0e0" stroke-width="1.15"/></svg>
<div class="a" style="left:1264px;top:930px;width:20px;height:20px;background:#4c4c4c;border:1px solid #3d3d3d;border-radius:4px 0 0 4px"></div>
<svg style="left:1266px;top:932px" width="16" height="16" viewBox="0 0 16 16"><circle cx="8" cy="8" r="6" fill="none" stroke="#9a9a9a" stroke-width="1.100"/><circle cx="8" cy="8" r="2" fill="#c8c8c8"/></svg>
<div class="a" style="left:1284px;top:930px;width:32px;height:20px;background:#2b2b2b;border:1px solid #3a3a3a;border-left:0;border-radius:0 4px 4px 0"></div>
<svg style="left:1286px;top:932px" width="16" height="16" viewBox="0 0 16 16"><path d="M1 13.500Q5 13.500 6.500 6Q8 0 9.500 6Q11 13.500 15 13.500" fill="none" stroke="#8a8a8a" stroke-width="1.100"/></svg>
<svg style="left:1304px;top:939px" width="8" height="5" viewBox="0 0 8 5"><path d="M0.7 0.7L4 4L7.3 0.7" fill="none" stroke="#5a5a5a" stroke-width="1.15"/></svg>
<div class="a" style="left:3px;top:954px;width:172px;height:18px;background:#1a1a1a;border:1px solid #383838;border-radius:4px 0 0 4px"></div>
<svg style="left:6px;top:956px" width="16" height="16" viewBox="0 0 16 16"><circle cx="9.500" cy="6" r="4.300" fill="none" stroke="#e0e0e0" stroke-width="1.200"/><path d="M6.500 9L1.500 14" stroke="#e0e0e0" stroke-width="1.300"/></svg>
<div class="a" style="left:175px;top:954px;width:22px;height:18px;background:#545454;border-radius:0 4px 0 0"></div>
<svg style="left:179px;top:959px" width="15" height="9" viewBox="0 0 15 9"><path d="M1 4.500H14M4 1.500L1 4.500L4 7.500M11 1.500L14 4.500L11 7.500" fill="none" stroke="#e6e6e6" stroke-width="1.100"/></svg>
<div class="a" style="left:199px;top:954px;width:905px;height:18px;background:#1b1b1b"></div>
<div class="a" style="left:1104px;top:954px;width:219px;height:18px;background:#1f1f1f"></div>
<div class="a blue" style="left:224px;top:955px;width:25px;height:15px;border-radius:4px"></div>
<span class="t n" style="left:221px;top:957px;width:30px;text-align:center;color:#fff;text-shadow:none">2</span>
<span class="t n" style="left:282px;top:957px;width:30px;text-align:center;color:#7a7a7a;text-shadow:none">20</span>
<span class="t n" style="left:350px;top:957px;width:30px;text-align:center;color:#7a7a7a;text-shadow:none">40</span>
<span class="t n" style="left:418px;top:957px;width:30px;text-align:center;color:#7a7a7a;text-shadow:none">60</span>
<span class="t n" style="left:486px;top:957px;width:30px;text-align:center;color:#7a7a7a;text-shadow:none">80</span>
<span class="t n" style="left:554px;top:957px;width:30px;text-align:center;color:#7a7a7a;text-shadow:none">100</span>
<span class="t n" style="left:622px;top:957px;width:30px;text-align:center;color:#7a7a7a;text-shadow:none">120</span>
<span class="t n" style="left:690px;top:957px;width:30px;text-align:center;color:#7a7a7a;text-shadow:none">140</span>
<span class="t n" style="left:758px;top:957px;width:30px;text-align:center;color:#7a7a7a;text-shadow:none">160</span>
<span class="t n" style="left:826px;top:957px;width:30px;text-align:center;color:#7a7a7a;text-shadow:none">180</span>
<span class="t n" style="left:894px;top:957px;width:30px;text-align:center;color:#7a7a7a;text-shadow:none">200</span>
<span class="t n" style="left:962px;top:957px;width:30px;text-align:center;color:#7a7a7a;text-shadow:none">220</span>
<span class="t n" style="left:1030px;top:957px;width:30px;text-align:center;color:#7a7a7a;text-shadow:none">240</span>
<div class="a" style="left:209px;top:960px;width:887px;height:8px;background:rgba(84,84,84,.96);border-radius:4px"></div>
<div class="a" style="left:209px;top:960px;width:8px;height:8px;border:1.5px solid #2a2a2a;border-radius:4px"></div>
<div class="a" style="left:1088px;top:960px;width:8px;height:8px;border:1.5px solid #2a2a2a;border-radius:4px"></div>
<div class="a" style="left:1099px;top:962px;width:2px;height:9px;background:#444"></div>
<div class="a" style="left:1319px;top:962px;width:2px;height:9px;background:#444"></div>
<!-- TIMELINE -->
<div class="a" style="left:0;top:970px;width:1326px;height:4px;background:#181818"></div>
<div class="a" style="left:1px;top:973px;width:1322px;height:24px;background:#2f2f2f;border-radius:6px"></div>
<div class="btn" style="left:9px;top:976px;width:30px;height:20px"></div>
<svg style="left:12px;top:978px" width="16" height="16" viewBox="0 0 16 16"><circle cx="8" cy="8" r="7" fill="#e6e6e6"/><path d="M8 8L11.500 3.500M8 8L11.500 11" stroke="#282828" stroke-width="1.500" fill="none"/><path d="M8 8L13 3.500L14.500 8L12.500 12Z" fill="#282828"/></svg>
<svg style="left:29px;top:985px" width="8" height="5" viewBox="0 0 8 5"><path d="M0.7 0.7L4 4L7.3 0.7" fill="none" stroke="#e0e0e0" stroke-width="1.15"/></svg>
<div class="btn" style="left:45px;top:976px;width:70px;height:20px;border-radius:4px 0 0 4px"></div>
<div class="btn" style="left:114px;top:976px;width:59px;height:20px;border-radius:0 4px 4px 0"></div>
<span class="t" style="left:53px;top:980px">Playback</span><svg style="left:103px;top:985px" width="8" height="5" viewBox="0 0 8 5"><path d="M0.7 0.7L4 4L7.3 0.7" fill="none" stroke="#e0e0e0" stroke-width="1.15"/></svg>
<span class="t" style="left:122px;top:980px">Keying</span><svg style="left:161px;top:985px" width="8" height="5" viewBox="0 0 8 5"><path d="M0.7 0.7L4 4L7.3 0.7" fill="none" stroke="#e0e0e0" stroke-width="1.15"/></svg>
<span class="t" style="left:182px;top:980px">View</span>
<span class="t" style="left:221px;top:980px">Marker</span>
<div class="a blue" style="left:570px;top:977px;width:18px;height:18px;border-radius:4px 0 0 4px"></div>
<svg style="left:571px;top:978px" width="16" height="16" viewBox="0 0 16 16"><circle cx="8" cy="8" r="3.800" fill="#fff"/></svg>
<div class="a" style="left:588px;top:976px;width:20px;height:20px;background:#282828;border:1px solid #3d3d3d;border-left:0;border-radius:0 4px 4px 0"></div>
<svg style="left:594px;top:985px" width="8" height="5" viewBox="0 0 8 5"><path d="M0.7 0.7L4 4L7.3 0.7" fill="none" stroke="#e0e0e0" stroke-width="1.15"/></svg>
<div class="a" style="left:615px;top:977px;width:118px;height:18px;background:#545454;border-radius:4px"></div>
<div class="a" style="left:634px;top:977px;width:1px;height:18px;background:#3d3d3d"></div>
<div class="a" style="left:654px;top:977px;width:1px;height:18px;background:#3d3d3d"></div>
<div class="a" style="left:674px;top:977px;width:1px;height:18px;background:#3d3d3d"></div>
<div class="a" style="left:693px;top:977px;width:1px;height:18px;background:#3d3d3d"></div>
<div class="a" style="left:713px;top:977px;width:1px;height:18px;background:#3d3d3d"></div>
<svg style="left:615px;top:977px" width="118" height="18" viewBox="0 0 118 18"><g fill="#f0f0f0"><rect x="5.500" y="4.500" width="1.800" height="9"/><path d="M14 4.500V13.500L8 9Z"/><path d="M26.500 5.500L30 9L26.500 12.500L23 9Z"/><path d="M36.500 5V13L31 9Z"/><path d="M53 3.500V14.500L44 9Z"/><path d="M64 3.500V14.500L73 9Z"/><path d="M80.500 5V13L86 9Z"/><path d="M90.500 5.500L94 9L90.500 12.500L87 9Z"/><path d="M103 4.500V13.500L109 9Z"/><rect x="109.700" y="4.500" width="1.800" height="9"/></g></svg>
<div class="a" style="left:1045px;top:977px;width:73px;height:18px;background:#545454;border-radius:4px"></div>
<span class="t" style="left:1045px;top:980px;width:73px;text-align:center">2</span>
<div class="a" style="left:1125px;top:977px;width:18px;height:18px;background:#545454;border-radius:4px 0 0 4px"></div>
<svg style="left:1126px;top:978px" width="16" height="16" viewBox="0 0 16 16"><g fill="none" stroke="#e6e6e6" stroke-width="1.200"><circle cx="8" cy="9" r="5.500"/><path d="M8 5.500V9H11M6 1.500H10M13 3L14.500 1.500"/></g></svg>
<div class="a" style="left:1144px;top:977px;width:87px;height:18px;background:#545454"></div>
<div class="a" style="left:1232px;top:977px;width:84px;height:18px;background:#545454;border-radius:0 4px 4px 0"></div>
<span class="t" style="left:1159px;top:980px">Start</span><span class="t" style="left:1211px;top:980px">1</span>
<span class="t" style="left:1247px;top:980px">End</span><span class="t n" style="left:1281px;top:980px">250</span>
<!-- STATUS -->
<div class="a" style="left:0;top:997px;width:1326px;height:21px;background:#1d1d1d"></div>
<svg style="left:12px;top:1000px" width="11" height="15" viewBox="0 0 11 15"><rect x="1" y="1" width="9" height="13" rx="3" fill="none" stroke="#9a9a9a" stroke-width="1.100"/><path d="M1.500 6V3.500Q1.500 1.500 4 1.500H5V6Z" fill="#b0b0b0"/></svg><span class="t" style="left:34px;top:1002px;color:#909090;text-shadow:none">Set Active Modifier</span>
<svg style="left:223px;top:1000px" width="11" height="15" viewBox="0 0 11 15"><rect x="1" y="1" width="9" height="13" rx="3" fill="none" stroke="#9a9a9a" stroke-width="1.100"/><rect x="4.300" y="2.500" width="2.400" height="5" rx="1.200" fill="#b0b0b0"/></svg><span class="t" style="left:245px;top:1002px;color:#909090;text-shadow:none">Pan View</span>
<svg style="left:434px;top:1000px" width="11" height="15" viewBox="0 0 11 15"><rect x="1" y="1" width="9" height="13" rx="3" fill="none" stroke="#9a9a9a" stroke-width="1.100"/><path d="M9.500 6V3.500Q9.500 1.500 7 1.500H6V6Z" fill="#b0b0b0"/></svg><span class="t" style="left:456px;top:1002px;color:#909090;text-shadow:none">Context Menu</span>
</div></body></html>
